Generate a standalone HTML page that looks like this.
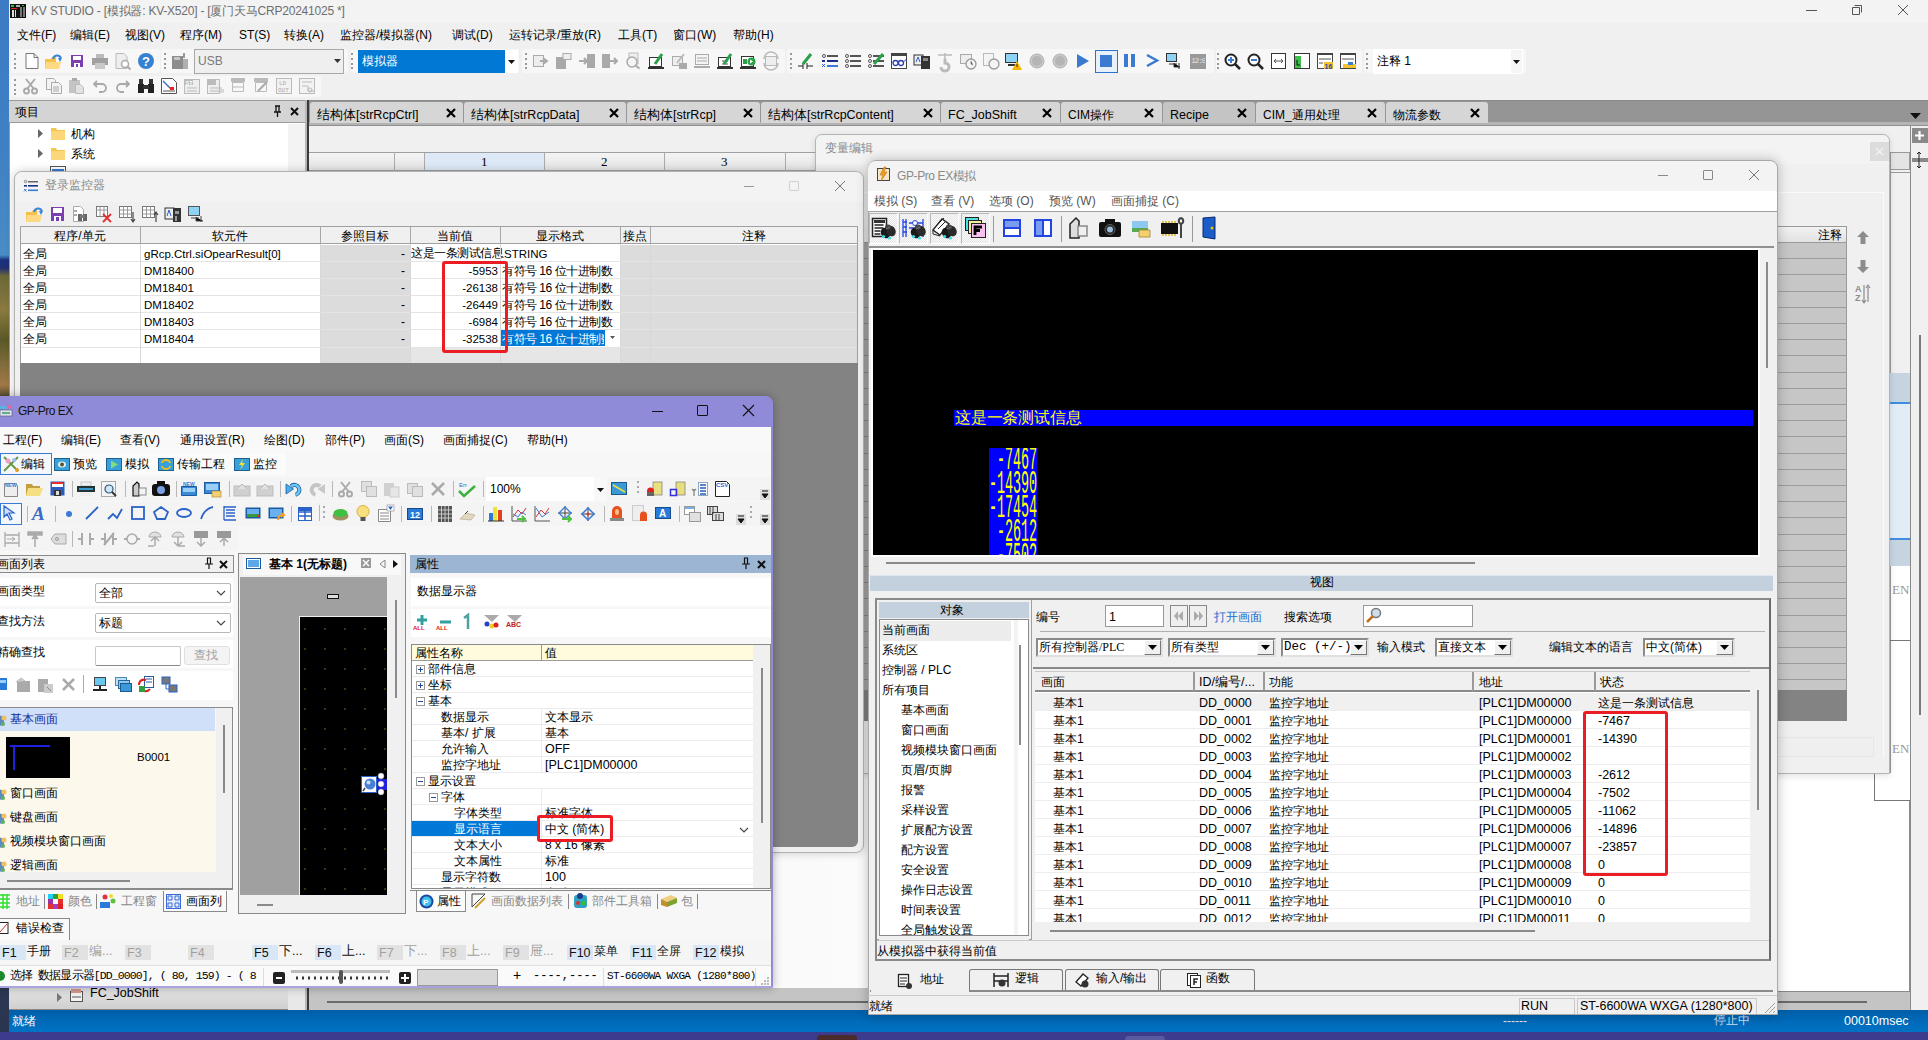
<!DOCTYPE html>
<html><head><meta charset="utf-8">
<style>
*{box-sizing:border-box;margin:0;padding:0}
html,body{width:1928px;height:1040px;overflow:hidden;background:#f0f0f0;font-family:"Liberation Sans",sans-serif;font-size:12px;color:#000;position:relative}
.a{position:absolute}
.t{position:absolute;white-space:nowrap;line-height:1}
svg{position:absolute;overflow:visible}
</style></head>
<body>
<div class="a" style="left:0;top:0;width:9px;height:1040px;background:linear-gradient(#3d7bc4 0,#3f80c4 150px,#4a8cc4 255px,#1a3080 260px,#203070 268px,#6a6838 276px,#8a7a40 310px,#5a5828 340px,#8a7040 370px,#a07848 385px,#5a5030 396px,#2d3b55 900px,#2a3550 1040px)"></div>
<!-- title bar -->
<div class="a" style="left:9px;top:0;width:1919px;height:23px;background:#f3f3f3"></div>
<svg class="a" style="left:10px;top:4px" width="16" height="14" viewBox="0 0 16 14"><rect width="16" height="14" fill="#111"/><rect x="1" y="1" width="3" height="2" fill="#2c2"/><rect x="6" y="1" width="4" height="2" fill="#aaa"/><rect x="1" y="4" width="6" height="1" fill="#e22"/><rect x="2" y="6" width="2" height="7" fill="#ddd"/><rect x="5" y="6" width="1" height="7" fill="#ddd"/><rect x="10" y="3" width="2" height="10" fill="#777"/><rect x="13" y="3" width="2" height="10" fill="#777"/><rect x="12" y="1" width="2" height="1" fill="#2c2"/></svg>
<div class="t" style="left:31px;top:5px;font-size:12px;letter-spacing:-.22px;color:#6e6e6e">KV STUDIO - [模拟器: KV-X520] - [厦门天马CRP20241025 *]</div>
<div class="a" style="left:1806px;top:10px;width:11px;height:1px;background:#555"></div>
<svg class="a" style="left:1851px;top:4px" width="12" height="12" viewBox="0 0 12 12"><path d="M3.5 1.5h7v7M1.5 3.5h7v7h-7z" fill="none" stroke="#555" stroke-width="1"/></svg>
<svg class="a" style="left:1897px;top:4px" width="12" height="12" viewBox="0 0 12 12"><path d="M1 1l10 10M11 1L1 11" stroke="#555" stroke-width="1"/></svg>
<!-- menu -->
<div class="a" style="left:9px;top:23px;width:1919px;height:24px;background:#f0f0f0"></div>
<div class="t" style="left:17px;top:29px;font-size:12px">文件(F)</div>
<div class="t" style="left:70px;top:29px;font-size:12px">编辑(E)</div>
<div class="t" style="left:125px;top:29px;font-size:12px">视图(V)</div>
<div class="t" style="left:180px;top:29px;font-size:12px">程序(M)</div>
<div class="t" style="left:239px;top:29px;font-size:12px">ST(S)</div>
<div class="t" style="left:284px;top:29px;font-size:12px">转换(A)</div>
<div class="t" style="left:340px;top:29px;font-size:12px">监控器/模拟器(N)</div>
<div class="t" style="left:452px;top:29px;font-size:12px">调试(D)</div>
<div class="t" style="left:509px;top:29px;font-size:12px">运转记录/重放(R)</div>
<div class="t" style="left:618px;top:29px;font-size:12px">工具(T)</div>
<div class="t" style="left:673px;top:29px;font-size:12px">窗口(W)</div>
<div class="t" style="left:733px;top:29px;font-size:12px">帮助(H)</div>

<!-- toolbar bands row1 -->
<div class="a" style="left:11px;top:49px;width:149px;height:24px;background:#f7f7f7;border-radius:3px"></div>
<div class="a" style="left:161px;top:49px;width:187px;height:24px;background:#f7f7f7;border-radius:3px"></div>
<div class="a" style="left:351px;top:49px;width:168px;height:24px;background:#f9f9f9;border-radius:3px"></div>
<div class="a" style="left:522px;top:49px;width:263px;height:24px;background:#f7f7f7;border-radius:3px"></div>
<div class="a" style="left:787px;top:49px;width:427px;height:24px;background:#f7f7f7;border-radius:3px"></div>
<div class="a" style="left:1216px;top:49px;width:146px;height:24px;background:#f7f7f7;border-radius:3px"></div>
<div class="a" style="left:1364px;top:49px;width:162px;height:24px;background:#f7f7f7;border-radius:3px"></div>
<!-- row2 -->
<div class="a" style="left:11px;top:76px;width:310px;height:21px;background:#f7f7f7;border-radius:3px"></div>
<!-- grips -->
<svg style="left:14px;top:53px" width="3" height="16"><g fill="#999"><rect y="0" width="2" height="2"/><rect y="5" width="2" height="2"/><rect y="10" width="2" height="2"/><rect y="14" width="2" height="2"/></g></svg>
<svg style="left:164px;top:53px" width="3" height="16"><g fill="#999"><rect y="0" width="2" height="2"/><rect y="5" width="2" height="2"/><rect y="10" width="2" height="2"/><rect y="14" width="2" height="2"/></g></svg>
<svg style="left:351px;top:53px" width="3" height="16"><g fill="#999"><rect y="0" width="2" height="2"/><rect y="5" width="2" height="2"/><rect y="10" width="2" height="2"/><rect y="14" width="2" height="2"/></g></svg>
<svg style="left:525px;top:53px" width="3" height="16"><g fill="#999"><rect y="0" width="2" height="2"/><rect y="5" width="2" height="2"/><rect y="10" width="2" height="2"/><rect y="14" width="2" height="2"/></g></svg>
<svg style="left:790px;top:53px" width="3" height="16"><g fill="#999"><rect y="0" width="2" height="2"/><rect y="5" width="2" height="2"/><rect y="10" width="2" height="2"/><rect y="14" width="2" height="2"/></g></svg>
<svg style="left:1217px;top:53px" width="3" height="16"><g fill="#999"><rect y="0" width="2" height="2"/><rect y="5" width="2" height="2"/><rect y="10" width="2" height="2"/><rect y="14" width="2" height="2"/></g></svg>
<svg style="left:1366px;top:53px" width="3" height="16"><g fill="#999"><rect y="0" width="2" height="2"/><rect y="5" width="2" height="2"/><rect y="10" width="2" height="2"/><rect y="14" width="2" height="2"/></g></svg>
<svg style="left:14px;top:79px" width="3" height="16"><g fill="#999"><rect y="0" width="2" height="2"/><rect y="5" width="2" height="2"/><rect y="10" width="2" height="2"/><rect y="14" width="2" height="2"/></g></svg>
<!-- row1 icons -->
<svg style="left:25px;top:53px" width="14" height="16"><path d="M1 .5h8l4 4v11H1z" fill="#fff" stroke="#777"/><path d="M9 .5v4h4" fill="none" stroke="#777"/></svg>
<svg style="left:45px;top:53px" width="18" height="16"><path d="M0 6h6l1-2h4v12H0z" fill="#f6c14a"/><path d="M1 9h15l-2 7H0z" fill="#fcd982"/><path d="M8 6c1-4 6-5 8-1" fill="none" stroke="#3a83d6" stroke-width="2"/><path d="M13 5l4 0-2 4z" fill="#3a83d6"/></svg>
<svg style="left:70px;top:54px" width="14" height="14"><rect x="1" y="1" width="12" height="12" fill="#7b3fb0"/><rect x="3" y="2" width="8" height="4" fill="#fff"/><rect x="4" y="9" width="6" height="4" fill="#fff"/><rect x="6" y="10" width="2" height="3" fill="#7b3fb0"/></svg>
<svg style="left:92px;top:54px" width="16" height="15"><rect x="4" y="0" width="8" height="4" fill="#bbb"/><rect x="0" y="4" width="16" height="7" fill="#a0a0a0"/><rect x="3" y="9" width="10" height="6" fill="#c8c8c8"/></svg>
<svg style="left:115px;top:53px" width="17" height="17"><path d="M1 .5h8l3 3v12H1z" fill="#eee" stroke="#bbb"/><circle cx="10" cy="11" r="3.5" fill="#fff" stroke="#aaa" stroke-width="1.5"/><path d="M12.5 13.5l3 3" stroke="#aaa" stroke-width="2"/></svg>
<svg style="left:138px;top:53px" width="16" height="16"><circle cx="8" cy="8" r="8" fill="#3781d2"/><text x="8" y="13" font-size="13" font-weight="bold" fill="#fff" text-anchor="middle" font-family="Liberation Sans">?</text></svg>
<svg style="left:172px;top:53px" width="17" height="16"><rect x="0" y="3" width="11" height="13" fill="#8c8c8c"/><rect x="2" y="4" width="6" height="3" fill="#c6c6c6"/><rect x="11" y="6" width="5" height="10" fill="#b0b0b0"/><path d="M12 0v5" stroke="#999" stroke-width="2"/></svg>
<!-- USB combo -->
<div class="a" style="left:194px;top:49px;width:150px;height:25px;border:1px solid #a8a8a8;background:#efefef"></div>
<div class="t" style="left:198px;top:55px;font-size:12px;color:#7a7a7a">USB</div>
<svg style="left:334px;top:59px" width="7" height="4"><path d="M0 0h7L3.5 4z" fill="#333"/></svg>
<!-- simulator combo -->
<div class="a" style="left:358px;top:50px;width:160px;height:23px;background:#fff"></div>
<div class="a" style="left:358px;top:50px;width:147px;height:23px;background:#0078d4"></div>
<div class="t" style="left:362px;top:55px;font-size:12px;color:#fff">模拟器</div>
<svg style="left:508px;top:60px" width="7" height="4"><path d="M0 0h7L3.5 4z" fill="#111"/></svg>

<!-- row2 icons -->
<svg style="left:23px;top:78px" width="15" height="17"><path d="M3 1l8 10M12 1L4 11" stroke="#aaa" stroke-width="2"/><circle cx="3.5" cy="13" r="2.5" fill="none" stroke="#aaa" stroke-width="2"/><circle cx="11.5" cy="13" r="2.5" fill="none" stroke="#aaa" stroke-width="2"/></svg>
<svg style="left:46px;top:78px" width="16" height="16"><path d="M.5 .5h7l2 2v9h-9z" fill="#f4f4f4" stroke="#aaa"/><path d="M5.5 4.5h7l3 3v8h-10z" fill="#f4f4f4" stroke="#aaa"/><path d="M7 9h6M7 11h6M7 13h6" stroke="#aaa"/></svg>
<svg style="left:69px;top:78px" width="16" height="16"><rect x="0" y="2" width="11" height="13" fill="#c4c4c4"/><rect x="3" y="0" width="5" height="3" fill="#aaa"/><path d="M6.5 6.5h5l3 3v6h-8z" fill="#e2e2e2" stroke="#bbb"/></svg>
<svg style="left:93px;top:80px" width="14" height="12"><path d="M4 1L1 4l3 3M1 4h8a4 4 0 010 8H6" fill="none" stroke="#a9a9a9" stroke-width="1.8"/></svg>
<svg style="left:116px;top:80px" width="14" height="12"><path d="M10 1l3 3-3 3M13 4H5a4 4 0 000 8h3" fill="none" stroke="#a9a9a9" stroke-width="1.8"/></svg>
<svg style="left:138px;top:78px" width="16" height="16"><rect x="1" y="1" width="4" height="6" fill="#333"/><rect x="11" y="1" width="4" height="6" fill="#333"/><rect x="0" y="6" width="6" height="9" fill="#222"/><rect x="10" y="6" width="6" height="9" fill="#222"/><rect x="5" y="7" width="6" height="4" fill="#333"/></svg>
<svg style="left:161px;top:78px" width="16" height="16"><path d="M.5 .5h11l4 4v11H.5z" fill="#fff" stroke="#555"/><path d="M2 3l8 8" stroke="#3a6fc4" stroke-width="1.5"/><rect x="9" y="9" width="4" height="3" fill="#e22"/><path d="M2 13h12" stroke="#555"/></svg>
<svg style="left:184px;top:79px" width="16" height="15"><rect x=".5" y=".5" width="15" height="14" fill="#eee" stroke="#bbb"/><rect x="1" y="1" width="8" height="5" fill="#bbb"/><text x="1.5" y="5.5" font-size="5.5" fill="#fff" font-family="Liberation Sans" font-weight="bold">ST</text><path d="M3 9h10M3 12h10" stroke="#bbb"/></svg>
<svg style="left:207px;top:79px" width="17" height="16"><rect x=".5" y=".5" width="12" height="14" fill="#eee" stroke="#bbb"/><rect x="1" y="1" width="8" height="5" fill="#bbb"/><path d="M3 9h9M3 12h9M14 8v6M16 10v4" stroke="#bbb"/></svg>
<svg style="left:230px;top:78px" width="16" height="15"><rect x="1" y="0" width="14" height="4" fill="#bbb"/><path d="M2.5 4.5h11v9h-11z" fill="none" stroke="#bbb"/><path d="M3 9h10" stroke="#bbb"/></svg>
<svg style="left:253px;top:78px" width="16" height="16"><rect x="1" y="0" width="14" height="4" fill="#bbb"/><path d="M2.5 4.5h11v9h-11z" fill="none" stroke="#bbb"/><path d="M5 13l9-9" stroke="#aaa" stroke-width="2"/></svg>
<svg style="left:276px;top:78px" width="16" height="16"><rect x=".5" y=".5" width="15" height="15" fill="#f2f2f2" stroke="#bbb"/><text x="3" y="7" font-size="6" fill="#aaa" font-family="Liberation Mono">LD</text><text x="2" y="14" font-size="6" fill="#aaa" font-family="Liberation Mono">OUT</text></svg>
<svg style="left:299px;top:78px" width="16" height="16"><rect x=".5" y=".5" width="15" height="15" fill="#f2f2f2" stroke="#bbb"/><path d="M3 4h10M3 8h6v5h6" fill="none" stroke="#bbb"/><circle cx="11" cy="12" r="2" fill="none" stroke="#bbb"/></svg>
<!-- row1 group3 icons (grayed) -->
<svg style="left:533px;top:54px" width="16" height="14"><rect x=".5" y="1.5" width="10" height="11" fill="#eee" stroke="#aaa"/><path d="M7 7h6M10 4l4 3-4 3" fill="none" stroke="#aaa" stroke-width="2"/></svg>
<svg style="left:556px;top:53px" width="16" height="16"><rect x="0" y="4" width="10" height="12" fill="#a9a9a9"/><rect x="7" y=".5" width="8" height="6" fill="#eee" stroke="#aaa"/></svg>
<svg style="left:579px;top:54px" width="16" height="14"><rect x="8" y="0" width="8" height="14" fill="#a9a9a9"/><path d="M0 7h8M5 4l3 3-3 3" fill="none" stroke="#aaa" stroke-width="2"/></svg>
<svg style="left:602px;top:54px" width="16" height="14"><rect x="0" y="0" width="8" height="14" fill="#a9a9a9"/><path d="M8 7h7M12 4l3 3-3 3" fill="none" stroke="#aaa" stroke-width="2"/></svg>
<svg style="left:625px;top:53px" width="16" height="16"><rect x="4" y="0" width="9" height="11" fill="#eee" stroke="#bbb"/><circle cx="7" cy="9" r="5" fill="#f4f4f4" stroke="#aaa" stroke-width="1.5"/><path d="M10.5 12.5l4 3" stroke="#aaa" stroke-width="2"/></svg>
<svg style="left:648px;top:53px" width="16" height="16"><rect x="1.5" y="4.5" width="12" height="9" fill="#fff" stroke="#333"/><rect x="0" y="14" width="16" height="2" fill="#333"/><path d="M7 11l7-10" stroke="#2aa04a" stroke-width="3"/></svg>
<svg style="left:671px;top:53px" width="16" height="16"><rect x="1.5" y="3.5" width="10" height="9" fill="#eee" stroke="#aaa"/><rect x="8" y="10" width="8" height="6" fill="#aaa"/><path d="M6 10l7-9" stroke="#bbb" stroke-width="2"/></svg>
<svg style="left:694px;top:53px" width="16" height="16"><rect x="1.5" y="1.5" width="13" height="10" fill="#f4f4f4" stroke="#aaa"/><path d="M3 5h10M3 8h10" stroke="#aaa"/><rect x="0" y="13" width="16" height="2" fill="#aaa"/></svg>
<svg style="left:717px;top:53px" width="16" height="16"><rect x="1.5" y="4.5" width="12" height="9" fill="#fff" stroke="#333"/><rect x="0" y="14" width="16" height="2" fill="#333"/><path d="M5 8h6M5 11h6" stroke="#555"/><path d="M7 11l7-10" stroke="#2aa04a" stroke-width="3"/></svg>
<svg style="left:740px;top:53px" width="16" height="16"><rect x="1.5" y="3.5" width="12" height="10" fill="#fff" stroke="#333"/><rect x="0" y="14" width="16" height="2" fill="#333"/><rect x="3" y="6" width="4" height="5" fill="#2aa04a"/><circle cx="11.5" cy="8.5" r="4" fill="#2aa04a"/><path d="M10 6.5v4l3-2z" fill="#fff"/></svg>
<svg style="left:763px;top:53px" width="16" height="16"><rect x="2.5" y="3.5" width="11" height="9" fill="#eee" stroke="#bbb"/><path d="M1 6a7 7 0 0114 0M15 10a7 7 0 01-14 0" fill="none" stroke="#bbb" stroke-width="1.5"/></svg>
<!-- group4 -->
<svg style="left:798px;top:53px" width="17" height="17"><path d="M0 13h5M9 13h6M5 10v6M9 10v6" stroke="#222"/><path d="M5 11l8-10" stroke="#2aa04a" stroke-width="3"/></svg>
<svg style="left:822px;top:54px" width="16" height="14"><circle cx="2" cy="2" r="1.5" fill="none" stroke="#555"/><rect x="5" y="1" width="11" height="2" fill="#555"/><rect x="0" y="6" width="3" height="2" fill="#1a2f8c"/><rect x="5" y="6" width="11" height="2" fill="#1a2f8c"/><path d="M0 10l3 3M3 10l-3 3" stroke="#2a62c8"/><rect x="5" y="11" width="11" height="2" fill="#3a7ad8"/></svg>
<svg style="left:845px;top:54px" width="16" height="14"><g fill="none" stroke="#555"><circle cx="2" cy="2" r="1.5"/><circle cx="2" cy="7" r="1.5"/><circle cx="2" cy="12" r="1.5"/></g><g fill="#555"><rect x="5" y="1" width="11" height="2"/><rect x="5" y="6" width="11" height="2"/><rect x="5" y="11" width="11" height="2"/></g></svg>
<svg style="left:868px;top:53px" width="17" height="16"><g fill="none" stroke="#555"><circle cx="2" cy="3" r="1.5"/><circle cx="2" cy="8" r="1.5"/><circle cx="2" cy="13" r="1.5"/></g><g fill="#555"><rect x="5" y="2" width="11" height="2"/><rect x="5" y="7" width="11" height="2"/><rect x="5" y="12" width="11" height="2"/></g><path d="M6 11l9-10" stroke="#2aa04a" stroke-width="3"/></svg>
<svg style="left:891px;top:53px" width="16" height="16"><rect x=".5" y=".5" width="15" height="15" fill="#fff" stroke="#444"/><rect x="0" y="0" width="16" height="3" fill="#444"/><circle cx="4.5" cy="10" r="2.5" fill="none" stroke="#2a3fb0" stroke-width="1.3"/><circle cx="10" cy="10" r="2.5" fill="none" stroke="#2a3fb0" stroke-width="1.3"/><path d="M12.5 9l3-3" stroke="#2a3fb0"/></svg>
<svg style="left:914px;top:53px" width="16" height="16"><rect x="0" y="2" width="9" height="10" fill="#eee" stroke="#333"/><path d="M2 9l2-5 2 5" fill="none" stroke="#2a62c8"/><rect x="7" y="3" width="9" height="13" fill="#333"/><rect x="9" y="5" width="5" height="3" fill="#888"/></svg>
<svg style="left:937px;top:53px" width="16" height="17"><path d="M1 2h14M8 0v6" stroke="#bbb" stroke-width="1.5"/><path d="M8 6v4a4 4 0 11-4 4" fill="none" stroke="#bbb" stroke-width="3"/></svg>
<svg style="left:960px;top:53px" width="17" height="17"><rect x=".5" y="1.5" width="11" height="9" fill="#eee" stroke="#aaa"/><circle cx="11" cy="11" r="5" fill="#f4f4f4" stroke="#999" stroke-width="1.3"/><path d="M11 8v3l2 1" stroke="#999"/></svg>
<svg style="left:983px;top:53px" width="17" height="17"><rect x=".5" y=".5" width="10" height="12" fill="#f4f4f4" stroke="#bbb"/><circle cx="11" cy="11" r="5" fill="#f4f4f4" stroke="#999" stroke-width="1.3"/></svg>
<svg style="left:1005px;top:53px" width="18" height="17"><rect x=".5" y=".5" width="12" height="9" fill="#8fd3f4" stroke="#333"/><rect x="3" y="11" width="7" height="2" fill="#333"/><path d="M12 8l5 9H7z" fill="#f4b400"/><rect x="11.5" y="11" width="1" height="3" fill="#333"/></svg>
<svg style="left:1029px;top:53px" width="16" height="16"><circle cx="8" cy="8" r="7" fill="#c8c8c8" stroke="#b0b0b0"/><circle cx="8" cy="8" r="5" fill="#b5b5b5"/></svg>
<svg style="left:1052px;top:53px" width="16" height="16"><circle cx="8" cy="8" r="7" fill="#c8c8c8" stroke="#b0b0b0"/><circle cx="8" cy="8" r="5" fill="#b5b5b5"/></svg>
<svg style="left:1076px;top:54px" width="14" height="14"><path d="M1 0l12 7-12 7z" fill="#3a7ad0"/></svg>
<div class="a" style="left:1095px;top:50px;width:23px;height:23px;border:1px solid #2a74d0;background:#e8f1fb"></div>
<div class="a" style="left:1100px;top:55px;width:12px;height:12px;background:#3a7ad0"></div>
<svg style="left:1124px;top:54px" width="12" height="13"><rect x="0" y="0" width="4" height="13" fill="#3a7ad0"/><rect x="7" y="0" width="4" height="13" fill="#3a7ad0"/></svg>
<svg style="left:1146px;top:54px" width="12" height="13"><path d="M1 1l10 5.5L1 12" fill="none" stroke="#3a7ad0" stroke-width="2.5"/></svg>
<svg style="left:1166px;top:53px" width="18" height="17"><rect x=".5" y=".5" width="10" height="8" fill="#8fd3f4" stroke="#333"/><path d="M3 11h8M8 10v4h6M13 10v6" stroke="#333"/></svg>
<div class="a" style="left:1190px;top:54px;width:16px;height:15px;background:#999"></div>
<div class="t" style="left:1191px;top:57px;width:14px;overflow:hidden;font-size:8px;letter-spacing:-1.2px;color:#e4e4e4;font-family:'Liberation Mono'">12:00</div>
<!-- group5 -->
<svg style="left:1224px;top:53px" width="17" height="17"><circle cx="7" cy="7" r="5.5" fill="#fff" stroke="#222" stroke-width="2"/><path d="M4 7h6M7 4v6" stroke="#3a7ad0" stroke-width="2"/><path d="M11 11l5 5" stroke="#222" stroke-width="2.5"/></svg>
<svg style="left:1247px;top:53px" width="17" height="17"><circle cx="7" cy="7" r="5.5" fill="#fff" stroke="#222" stroke-width="2"/><path d="M4 7h6" stroke="#3a7ad0" stroke-width="2"/><path d="M11 11l5 5" stroke="#222" stroke-width="2.5"/></svg>
<svg style="left:1271px;top:53px" width="15" height="16"><rect x=".5" y=".5" width="14" height="15" fill="#fff" stroke="#333"/><path d="M3 8h9M5 6l-2 2 2 2M10 6l2 2-2 2" fill="none" stroke="#555"/></svg>
<svg style="left:1294px;top:53px" width="16" height="16"><rect x=".5" y=".5" width="15" height="15" fill="#fff" stroke="#333"/><rect x="1" y="3" width="6" height="12" fill="#3cc04a"/><path d="M3 7v5h3" fill="none" stroke="#111"/></svg>
<svg style="left:1317px;top:53px" width="16" height="16"><rect x=".5" y=".5" width="15" height="15" fill="#fff" stroke="#444"/><rect x="0" y="0" width="16" height="2" fill="#444"/><path d="M2 6h12M2 10h4" stroke="#555"/><rect x="7" y="9" width="9" height="7" fill="#f4c430"/><text x="7.5" y="15.5" font-size="7" fill="#1a4aa8" font-family="Liberation Sans" font-weight="bold">16</text></svg>
<svg style="left:1340px;top:53px" width="16" height="16"><rect x=".5" y=".5" width="15" height="15" fill="#fff" stroke="#444"/><rect x="0" y="0" width="16" height="2" fill="#444"/><path d="M2 6h12" stroke="#555"/><rect x="3" y="11" width="13" height="4" fill="#f4c430"/><rect x="8" y="9" width="5" height="3" fill="#3a7ad0"/></svg>
<!-- comment combo -->
<div class="a" style="left:1373px;top:49px;width:150px;height:25px;background:#fff"></div>
<div class="a" style="left:1511px;top:50px;width:11px;height:23px;background:#f6f6f6"></div>
<div class="t" style="left:1377px;top:55px;font-size:12px">注释 1</div>
<svg style="left:1513px;top:60px" width="7" height="4"><path d="M0 0h7L3.5 4z" fill="#111"/></svg>

<!-- project panel -->
<div class="a" style="left:9px;top:100px;width:297px;height:23px;background:#d4d4d4;border-top:1px solid #9a9a9a;border-bottom:1px solid #9a9a9a"></div>
<div class="t" style="left:15px;top:106px;font-size:12px">项目</div>
<svg style="left:273px;top:106px" width="9" height="11"><path d="M2 0h5M3 0v6M6 0v6M1 6h7M4.5 6v5" stroke="#111" stroke-width="1.3"/></svg>
<svg style="left:290px;top:107px" width="9" height="9"><path d="M1 1l7 7M8 1L1 8" stroke="#111" stroke-width="2"/></svg>
<div class="a" style="left:9px;top:123px;width:297px;height:909px;background:#fff;border-left:1px solid #9a9a9a"></div>
<div class="a" style="left:288px;top:124px;width:17px;height:50px;background:#f3f3f3"></div>
<svg style="left:38px;top:129px" width="5" height="9"><path d="M0 0l5 4.5L0 9z" fill="#666"/></svg>
<svg style="left:51px;top:128px" width="14" height="12"><path d="M0 0h5l1 2h8v10H0z" fill="#f4c650"/><rect x="0" y="3" width="14" height="9" fill="#fbd77a"/></svg>
<div class="t" style="left:71px;top:128px;font-size:12px">机构</div>
<svg style="left:38px;top:149px" width="5" height="9"><path d="M0 0l5 4.5L0 9z" fill="#666"/></svg>
<svg style="left:51px;top:148px" width="14" height="12"><path d="M0 0h5l1 2h8v10H0z" fill="#f4c650"/><rect x="0" y="3" width="14" height="9" fill="#fbd77a"/></svg>
<div class="t" style="left:71px;top:148px;font-size:12px">系统</div>
<div class="a" style="left:50px;top:166px;width:16px;height:6px;border:1px solid #555;border-bottom:none;background:#fff"></div>
<div class="a" style="left:52px;top:169px;width:12px;height:3px;background:#3a7ad0"></div>
<div class="a" style="left:305px;top:100px;width:2px;height:932px;background:#b8b8b8"></div>
<div class="a" style="left:307px;top:100px;width:2px;height:910px;background:#3a3a3a"></div>
<!-- bottom tree row visible -->
<div class="a" style="left:9px;top:988px;width:296px;height:22px;background:linear-gradient(#e6e6e6,#cfcfcf);border-bottom:1px solid #888"></div><div class="a" style="left:288px;top:988px;width:17px;height:22px;background:#e8e8e8"></div>
<svg style="left:57px;top:993px" width="5" height="9"><path d="M0 0l5 4.5L0 9z" fill="#777"/></svg>
<svg style="left:69px;top:989px" width="16" height="14"><rect x="1.5" y="2.5" width="12" height="10" fill="#f2f2f2" stroke="#555"/><rect x="2" y="0" width="10" height="4" fill="#d59a8a"/><path d="M3 8h9" stroke="#555"/></svg>
<div class="t" style="left:90px;top:987px;font-size:12.5px">FC_JobShift</div>
<!-- tab strip -->
<div class="a" style="left:309px;top:100px;width:1619px;height:26px;background:#959595;border-top:1px solid #8a8a8a"></div>
<div class="a" style="left:309px;top:122px;width:1619px;height:3px;background:#b4b4b4"></div>
<div class="a" style="left:309px;top:125px;width:1619px;height:1px;background:#909090"></div>

<div class="a" style="left:310px;top:102px;width:153px;height:21px;background:#d6d6d6;border-radius:3px 3px 0 0"></div>
<div class="t" style="left:317px;top:109px;font-size:12.5px">结构体[strRcpCtrl]</div>
<svg style="left:446px;top:108px" width="10" height="10"><path d="M1 1l8 8M9 1L1 9" stroke="#000" stroke-width="2.2"/></svg>
<div class="a" style="left:464px;top:102px;width:162px;height:21px;background:#d6d6d6;border-radius:3px 3px 0 0"></div>
<div class="t" style="left:471px;top:109px;font-size:12.5px">结构体[strRcpData]</div>
<svg style="left:609px;top:108px" width="10" height="10"><path d="M1 1l8 8M9 1L1 9" stroke="#000" stroke-width="2.2"/></svg>
<div class="a" style="left:627px;top:102px;width:133px;height:21px;background:#d6d6d6;border-radius:3px 3px 0 0"></div>
<div class="t" style="left:634px;top:109px;font-size:12.5px">结构体[strRcp]</div>
<svg style="left:743px;top:108px" width="10" height="10"><path d="M1 1l8 8M9 1L1 9" stroke="#000" stroke-width="2.2"/></svg>
<div class="a" style="left:761px;top:102px;width:179px;height:21px;background:#d6d6d6;border-radius:3px 3px 0 0"></div>
<div class="t" style="left:768px;top:109px;font-size:12.5px">结构体[strRcpContent]</div>
<svg style="left:923px;top:108px" width="10" height="10"><path d="M1 1l8 8M9 1L1 9" stroke="#000" stroke-width="2.2"/></svg>
<div class="a" style="left:941px;top:102px;width:119px;height:21px;background:#d6d6d6;border-radius:3px 3px 0 0"></div>
<div class="t" style="left:948px;top:109px;font-size:12.5px">FC_JobShift</div>
<svg style="left:1042px;top:108px" width="10" height="10"><path d="M1 1l8 8M9 1L1 9" stroke="#000" stroke-width="2.2"/></svg>
<div class="a" style="left:1061px;top:102px;width:101px;height:21px;background:#d6d6d6;border-radius:3px 3px 0 0"></div>
<div class="t" style="left:1068px;top:109px;font-size:12px">CIM操作</div>
<svg style="left:1144px;top:108px" width="10" height="10"><path d="M1 1l8 8M9 1L1 9" stroke="#000" stroke-width="2.2"/></svg>
<div class="a" style="left:1163px;top:102px;width:92px;height:21px;background:#c4c4c4;border-radius:3px 3px 0 0"></div>
<div class="t" style="left:1170px;top:109px;font-size:12.5px">Recipe</div>
<svg style="left:1237px;top:108px" width="10" height="10"><path d="M1 1l8 8M9 1L1 9" stroke="#000" stroke-width="2.2"/></svg>
<div class="a" style="left:1256px;top:102px;width:129px;height:21px;background:#d6d6d6;border-radius:3px 3px 0 0"></div>
<div class="t" style="left:1263px;top:109px;font-size:12px">CIM_通用处理</div>
<svg style="left:1367px;top:108px" width="10" height="10"><path d="M1 1l8 8M9 1L1 9" stroke="#000" stroke-width="2.2"/></svg>
<div class="a" style="left:1386px;top:102px;width:102px;height:21px;background:#d6d6d6;border-radius:3px 3px 0 0"></div>
<div class="t" style="left:1393px;top:109px;font-size:12px">物流参数</div>
<svg style="left:1470px;top:108px" width="10" height="10"><path d="M1 1l8 8M9 1L1 9" stroke="#000" stroke-width="2.2"/></svg>
<svg style="left:1910px;top:113px" width="11" height="6"><path d="M0 0h11L5.5 6z" fill="#111"/></svg>
<!-- MDI content: grid doc -->
<div class="a" style="left:309px;top:126px;width:1619px;height:884px;background:#f0f0f0"></div>
<div class="a" style="left:309px;top:152px;width:510px;height:19px;background:linear-gradient(#f4f4f4,#e4e4e4);border-top:1px solid #a0a0a0;border-bottom:1px solid #a0a0a0"></div>
<div class="a" style="left:394px;top:152px;width:1px;height:19px;background:#aaa"></div>
<div class="a" style="left:424px;top:153px;width:120px;height:17px;background:#dde9f6;border-left:1px solid #aaa"></div>
<div class="a" style="left:544px;top:152px;width:1px;height:19px;background:#aaa"></div>
<div class="a" style="left:664px;top:152px;width:1px;height:19px;background:#aaa"></div>
<div class="a" style="left:785px;top:152px;width:1px;height:19px;background:#aaa"></div>
<div class="a" style="left:309px;top:171px;width:1601px;height:817px;background:linear-gradient(90deg,#f4f4f4,#fcfcfc 40%,#fff)"></div>
<div class="t" style="left:481px;top:155px;font-size:13px;font-family:'Liberation Serif'">1</div>
<div class="t" style="left:601px;top:155px;font-size:13px;font-family:'Liberation Serif'">2</div>
<div class="t" style="left:721px;top:155px;font-size:13px;font-family:'Liberation Serif'">3</div>
<div class="a" style="left:309px;top:988px;width:1601px;height:22px;background:#c4c4c4"></div>
<div class="a" style="left:327px;top:1001px;width:1540px;height:2px;background:#6a6a6a"></div>
<!-- right dock strip -->
<div class="a" style="left:1910px;top:126px;width:18px;height:884px;background:#f0f0f0;border-left:1px solid #8a8a8a"></div>
<div class="a" style="left:1912px;top:128px;width:16px;height:15px;background:#8a8a8a"></div>
<svg style="left:1914px;top:130px" width="11" height="11"><path d="M5.5 1v9M1 5.5h9" stroke="#fff" stroke-width="2.2"/></svg>
<svg style="left:1910px;top:151px" width="18" height="18"><path d="M2 8h16M2 10h16M9 1v16M7 3l2-2 2 2M7 15l2 2 2-2" fill="none" stroke="#222" stroke-width="1"/></svg>
<div class="a" style="left:1919px;top:335px;width:2px;height:380px;background:#7a7a7a"></div>
<!-- panel behind varedit -->
<div class="a" style="left:1890px;top:152px;width:20px;height:840px;background:#f0f0f0;border-left:1px solid #9a9a9a"></div>
<div class="a" style="left:1890px;top:152px;width:20px;height:18px;background:#e4e4e4;border:1px solid #9a9a9a"></div>
<div class="a" style="left:1890px;top:172px;width:20px;height:1px;background:#9a9a9a"></div>
<div class="a" style="left:1890px;top:373px;width:20px;height:29px;background:#c6d4e2"></div>
<div class="a" style="left:1890px;top:402px;width:20px;height:2px;background:#3d8ee0"></div>
<div class="a" style="left:1890px;top:404px;width:20px;height:134px;background:#e1ecf7"></div>
<div class="a" style="left:1890px;top:538px;width:20px;height:2px;background:#3d8ee0"></div>
<div class="a" style="left:1890px;top:540px;width:20px;height:26px;background:#c6d4e2"></div>
<div class="a" style="left:1890px;top:566px;width:20px;height:426px;background:#fff;border-left:1px solid #9a9a9a"></div>
<div class="a" style="left:1890px;top:640px;width:20px;height:1px;background:#777"></div>
<div class="t" style="left:1892px;top:583px;font-size:13px;color:#999;font-family:'Liberation Serif'">EN</div>
<div class="t" style="left:1892px;top:742px;font-size:13px;color:#999;font-family:'Liberation Serif'">EN</div>
<div class="a" style="left:1777px;top:773px;width:133px;height:219px;background:#fff;border-right:1px solid #8a8a8a;border-bottom:1px solid #8a8a8a"></div>
<div class="a" style="left:1874px;top:773px;width:36px;height:28px;border-left:1px solid #777;border-bottom:1px solid #777;background:#fff"></div>
<!-- status bar -->
<div class="a" style="left:9px;top:1010px;width:1919px;height:22px;background:linear-gradient(#005ea8,#006ab8 50%,#0072c4)"></div>
<div class="t" style="left:12px;top:1015px;font-size:12px;color:#fff">就绪</div>
<div class="t" style="left:1503px;top:1015px;font-size:12px;color:#dfe8f3">------</div>
<div class="t" style="left:1714px;top:1014px;font-size:12px;color:#cfdff0">停止中</div>
<div class="t" style="left:1844px;top:1015px;font-size:12.5px;color:#fff">00010msec</div>
<div class="a" style="left:0;top:1032px;width:1928px;height:8px;background:#3d3b8c"></div>
<div class="a" style="left:817px;top:1035px;width:40px;height:8px;background:#4a2a2a;border-radius:4px"></div>
<div class="a" style="left:1125px;top:1036px;width:40px;height:8px;background:#5a5aa0;border-radius:4px"></div>

<!-- 变量编辑 window -->
<div class="a" style="left:815px;top:134px;width:1075px;height:640px;background:#f0f0f0;border:1px solid #b4b4b4;border-radius:7px 7px 0 0;box-shadow:0 2px 6px rgba(0,0,0,.12)"></div>
<div class="a" style="left:816px;top:135px;width:1073px;height:29px;background:#f3f3f3;border-radius:7px 7px 0 0"></div>
<div class="t" style="left:825px;top:142px;font-size:12px;color:#8a8a8a">变量编辑</div>
<div class="a" style="left:1870px;top:142px;width:19px;height:19px;background:#dcdcdc"></div>
<svg style="left:1876px;top:148px" width="7" height="7"><path d="M0 0l7 7M7 0L0 7" stroke="#f4f4f4" stroke-width="1.2"/></svg>
<div class="a" style="left:816px;top:192px;width:1068px;height:1px;background:#fafafa"></div>
<div class="a" style="left:1883px;top:192px;width:1px;height:565px;background:#fafafa"></div>
<div class="a" style="left:1777px;top:226px;width:70px;height:17px;background:linear-gradient(#f2f2f2,#e2e2e2);border:1px solid #9a9a9a;border-left:none"></div>
<div class="t" style="left:1818px;top:229px;font-size:12px">注释</div>
<div class="a" style="left:1777px;top:243px;width:70px;height:447px;background:repeating-linear-gradient(#c6c6c6 0,#c6c6c6 15.2px,#9c9c9c 15.2px,#9c9c9c 16.2px);border-right:1px solid #9a9a9a"></div>
<div class="a" style="left:1777px;top:690px;width:70px;height:31px;background:#838383"></div>
<div class="a" style="left:1777px;top:737px;width:97px;height:20px;border:1px solid #e6e6e6;border-left:none;background:#efefef"></div>
<svg style="left:1857px;top:231px" width="12" height="14"><path d="M6 0l6 6H8.5v7h-5V6H0z" fill="#8c8c8c"/></svg>
<svg style="left:1857px;top:259px" width="12" height="14"><path d="M6 14l6-6H8.5V1h-5v7H0z" fill="#8c8c8c"/></svg>
<div class="t" style="left:1855px;top:285px;font-size:9px;color:#8c8c8c;font-weight:bold">A</div>
<div class="t" style="left:1855px;top:294px;font-size:9px;color:#8c8c8c;font-weight:bold">Z</div>
<svg style="left:1862px;top:284px" width="8" height="20"><path d="M2 1v17M6 3v15M0 16l2 3 2-3M4 4l2-3 2 3" fill="none" stroke="#8c8c8c" stroke-width="1.2"/></svg>
<div class="a" style="left:863px;top:226px;width:5px;height:17px;background:#ececec;border-bottom:1px solid #999"></div>
<div class="a" style="left:863px;top:243px;width:5px;height:447px;background:repeating-linear-gradient(#a8a8a8 0,#a8a8a8 15.2px,#888 15.2px,#888 16.2px)"></div>
<div class="a" style="left:863px;top:690px;width:5px;height:31px;background:#838383"></div>

<!-- login monitor window -->
<div class="a" style="left:14px;top:171px;width:850px;height:682px;background:#f0f0f0;border:1px solid #b2b2b2;border-radius:8px;box-shadow:0 0 10px rgba(0,0,0,.2)"></div>
<div class="a" style="left:15px;top:172px;width:848px;height:30px;background:#f3f3f3;border-radius:8px 8px 0 0"></div>
<svg style="left:24px;top:180px" width="14" height="12"><circle cx="1.5" cy="1.5" r="1.2" fill="none" stroke="#666" stroke-width=".8"/><rect x="4" y="1" width="10" height="1.5" fill="#666"/><rect x="0" y="5" width="3" height="1.6" fill="#1a2f8c"/><rect x="4" y="5" width="10" height="1.6" fill="#1a2f8c"/><path d="M0 9l2.5 2.5M2.5 9L0 11.5" stroke="#2a62c8" stroke-width=".8"/><rect x="4" y="9.5" width="10" height="1.6" fill="#3a7ad8"/></svg>
<div class="t" style="left:45px;top:179px;font-size:12px;color:#8a8a8a">登录监控器</div>
<div class="a" style="left:744px;top:186px;width:10px;height:1px;background:#999"></div>
<div class="a" style="left:789px;top:181px;width:10px;height:10px;border:1px solid #d0d0d0;border-radius:1px"></div>
<svg style="left:835px;top:181px" width="10" height="10"><path d="M0 0l10 10M10 0L0 10" stroke="#777" stroke-width="1"/></svg>
<svg style="left:26px;top:206px" width="17" height="17"><path d="M0 6h6l1-2h4v12H0z" fill="#f6c14a"/><path d="M1 9h15l-2 7H0z" fill="#fcd982"/><path d="M8 6c1-4 6-5 8-1" fill="none" stroke="#3a83d6" stroke-width="2"/><path d="M13 5l4 0-2 4z" fill="#3a83d6"/></svg>
<svg style="left:50px;top:206px" width="17" height="17"><rect x="1" y="1" width="13" height="14" fill="#7b3fb0"/><rect x="3" y="2" width="9" height="5" fill="#fff"/><rect x="4" y="10" width="7" height="5" fill="#fff"/><rect x="6" y="11" width="3" height="4" fill="#7b3fb0"/></svg>
<svg style="left:73px;top:206px" width="17" height="17"><path d="M.5 .5h7l3 3v12h-10z" fill="#fff" stroke="#aaa"/><rect x="5" y="8" width="4" height="7" fill="#666"/><rect x="10" y="8" width="4" height="7" fill="#666"/><rect x="7" y="9" width="5" height="3" fill="#777"/><path d="M1 5h3M1 9h3" stroke="#555"/></svg>
<svg style="left:96px;top:206px" width="17" height="17"><rect x=".5" y=".5" width="11" height="10" fill="#fff" stroke="#777"/><path d="M.5 4h11M4 .5v10M8 .5v10" stroke="#999"/><path d="M7 8l8 8M15 8l-8 8" stroke="#e03030" stroke-width="1.8"/></svg>
<svg style="left:119px;top:206px" width="17" height="17"><rect x=".5" y=".5" width="12" height="11" fill="#fff" stroke="#777"/><path d="M.5 4h12M.5 8h12M4.5 .5v11M8.5 .5v11" stroke="#999"/><path d="M14 6v10M12 13l2 3 2-3" fill="none" stroke="#444" stroke-width="1.2"/></svg>
<svg style="left:142px;top:206px" width="17" height="17"><rect x=".5" y=".5" width="12" height="11" fill="#fff" stroke="#777"/><path d="M.5 4h12M.5 8h12M4.5 .5v11M8.5 .5v11" stroke="#999"/><path d="M14 16V6M12 9l2-3 2 3" fill="none" stroke="#444" stroke-width="1.2"/></svg>
<svg style="left:165px;top:206px" width="17" height="17"><rect x="0" y="2" width="9" height="11" fill="#eee" stroke="#333"/><path d="M2 10l2-6 2 6" fill="none" stroke="#2a62c8"/><rect x="8" y="2" width="8" height="14" fill="#333"/><rect x="10" y="5" width="4" height="3" fill="#999"/><rect x="10" y="10" width="2" height="5" fill="#999"/></svg>
<svg style="left:188px;top:206px" width="17" height="17"><rect x=".5" y=".5" width="11" height="9" fill="#8fd3f4" stroke="#555"/><path d="M3 12h8M8 11v4h7M13 10v6" stroke="#444"/></svg>
<div class="a" style="left:20px;top:226px;width:838px;height:137px;background:#fff;border:1px solid #a0a0a0;border-bottom:none"></div>
<div class="a" style="left:21px;top:227px;width:836px;height:17px;background:#f0f0f0;border-bottom:1px solid #a0a0a0"></div>
<div class="t" style="left:20px;width:120px;text-align:center;top:230px;font-size:12px">程序/单元</div>
<div class="t" style="left:140px;width:180px;text-align:center;top:230px;font-size:12px">软元件</div>
<div class="t" style="left:320px;width:90px;text-align:center;top:230px;font-size:12px">参照目标</div>
<div class="t" style="left:410px;width:90px;text-align:center;top:230px;font-size:12px">当前值</div>
<div class="t" style="left:500px;width:120px;text-align:center;top:230px;font-size:12px">显示格式</div>
<div class="t" style="left:620px;width:30px;text-align:center;top:230px;font-size:12px">接点</div>
<div class="t" style="left:650px;width:207px;text-align:center;top:230px;font-size:12px">注释</div>
<div class="a" style="left:321px;top:245px;width:89px;height:118px;background:#dcdcdc"></div>
<div class="a" style="left:621px;top:245px;width:236px;height:118px;background:#dcdcdc"></div>
<div class="a" style="left:411px;top:347px;width:210px;height:16px;background:#e6e6e6"></div>
<div class="t" style="left:23px;top:248px;font-size:12px">全局</div>
<div class="t" style="left:144px;top:249px;font-size:11.5px">gRcp.Ctrl.siOpearResult[0]</div>
<div class="t" style="left:401px;top:248px;font-size:12px">-</div>
<div class="t" style="left:411px;top:248px;font-size:11.5px;letter-spacing:-.5px">这是一条测试信息</div>
<div class="t" style="left:504px;top:249px;font-size:11.5px">STRING</div>
<div class="t" style="left:23px;top:265px;font-size:12px">全局</div>
<div class="t" style="left:144px;top:266px;font-size:11.5px">DM18400</div>
<div class="t" style="left:401px;top:265px;font-size:12px">-</div>
<div class="t" style="left:411px;width:87px;text-align:right;top:266px;font-size:11.5px">-5953</div>
<div class="t" style="left:502px;top:265px;font-size:12px;letter-spacing:-.5px">有符号 16 位十进制数</div>
<div class="t" style="left:23px;top:282px;font-size:12px">全局</div>
<div class="t" style="left:144px;top:283px;font-size:11.5px">DM18401</div>
<div class="t" style="left:401px;top:282px;font-size:12px">-</div>
<div class="t" style="left:411px;width:87px;text-align:right;top:283px;font-size:11.5px">-26138</div>
<div class="t" style="left:502px;top:282px;font-size:12px;letter-spacing:-.5px">有符号 16 位十进制数</div>
<div class="t" style="left:23px;top:299px;font-size:12px">全局</div>
<div class="t" style="left:144px;top:300px;font-size:11.5px">DM18402</div>
<div class="t" style="left:401px;top:299px;font-size:12px">-</div>
<div class="t" style="left:411px;width:87px;text-align:right;top:300px;font-size:11.5px">-26449</div>
<div class="t" style="left:502px;top:299px;font-size:12px;letter-spacing:-.5px">有符号 16 位十进制数</div>
<div class="t" style="left:23px;top:316px;font-size:12px">全局</div>
<div class="t" style="left:144px;top:317px;font-size:11.5px">DM18403</div>
<div class="t" style="left:401px;top:316px;font-size:12px">-</div>
<div class="t" style="left:411px;width:87px;text-align:right;top:317px;font-size:11.5px">-6984</div>
<div class="t" style="left:502px;top:316px;font-size:12px;letter-spacing:-.5px">有符号 16 位十进制数</div>
<div class="t" style="left:23px;top:333px;font-size:12px">全局</div>
<div class="t" style="left:144px;top:334px;font-size:11.5px">DM18404</div>
<div class="t" style="left:401px;top:333px;font-size:12px">-</div>
<div class="t" style="left:411px;width:87px;text-align:right;top:334px;font-size:11.5px">-32538</div>
<div class="a" style="left:501px;top:330px;width:104px;height:16px;background:#0078d7"></div>
<div class="a" style="left:502px;top:333px;width:102px;overflow:hidden;white-space:nowrap;line-height:1;font-size:12px;color:#fff;letter-spacing:-.5px">有符号 16 位十进制数</div>
<svg style="left:610px;top:336px" width="5" height="3"><path d="M0 0h5L2.5 3z" fill="#555"/></svg>
<div class="a" style="left:21px;top:261px;width:836px;height:1px;background:#e4e4e4"></div>
<div class="a" style="left:21px;top:278px;width:836px;height:1px;background:#e4e4e4"></div>
<div class="a" style="left:21px;top:295px;width:836px;height:1px;background:#e4e4e4"></div>
<div class="a" style="left:21px;top:312px;width:836px;height:1px;background:#e4e4e4"></div>
<div class="a" style="left:21px;top:329px;width:836px;height:1px;background:#e4e4e4"></div>
<div class="a" style="left:21px;top:347px;width:836px;height:1px;background:#e4e4e4"></div>
<div class="a" style="left:21px;top:363px;width:836px;height:1px;background:#e4e4e4"></div>
<div class="a" style="left:140px;top:227px;width:1px;height:136px;background:#d8d8d8"></div>
<div class="a" style="left:320px;top:227px;width:1px;height:136px;background:#d8d8d8"></div>
<div class="a" style="left:410px;top:227px;width:1px;height:136px;background:#d8d8d8"></div>
<div class="a" style="left:500px;top:227px;width:1px;height:136px;background:#d8d8d8"></div>
<div class="a" style="left:620px;top:227px;width:1px;height:136px;background:#d8d8d8"></div>
<div class="a" style="left:650px;top:227px;width:1px;height:136px;background:#d8d8d8"></div>
<div class="a" style="left:140px;top:227px;width:1px;height:17px;background:#a8a8a8"></div>
<div class="a" style="left:320px;top:227px;width:1px;height:17px;background:#a8a8a8"></div>
<div class="a" style="left:410px;top:227px;width:1px;height:17px;background:#a8a8a8"></div>
<div class="a" style="left:500px;top:227px;width:1px;height:17px;background:#a8a8a8"></div>
<div class="a" style="left:620px;top:227px;width:1px;height:17px;background:#a8a8a8"></div>
<div class="a" style="left:650px;top:227px;width:1px;height:17px;background:#a8a8a8"></div>
<div class="a" style="left:20px;top:363px;width:838px;height:484px;background:#838383;border-radius:0 0 6px 0"></div>
<div class="a" style="left:442px;top:261px;width:66px;height:92px;border:3px solid #ec1c24;border-radius:3px"></div>

<!-- simulator window -->
<div class="a" style="left:868px;top:160px;width:910px;height:855px;background:#f0f0f0;border:1px solid #a8a8a8;border-radius:8px 8px 0 0;box-shadow:0 0 12px rgba(0,0,0,.25)"></div>
<div class="a" style="left:868px;top:161px;width:909px;height:30px;background:#f3f3f3;border-radius:8px 8px 0 0"></div>
<svg style="left:877px;top:167px" width="13" height="14"><rect x=".5" y="1.5" width="12" height="12" fill="#f3e7c8" stroke="#444"/><path d="M7 0L3 8h3l-2 6 6-9H7l2-5z" fill="#f0a020" stroke="#c06000" stroke-width=".5"/></svg>
<div class="t" style="left:897px;top:170px;font-size:12px;letter-spacing:-.4px;color:#8a8a8a">GP-Pro EX模拟</div>
<div class="a" style="left:1658px;top:175px;width:10px;height:1px;background:#888"></div>
<div class="a" style="left:1703px;top:170px;width:10px;height:10px;border:1px solid #888;border-radius:1px"></div>
<svg style="left:1749px;top:170px" width="10" height="10"><path d="M0 0l10 10M10 0L0 10" stroke="#777" stroke-width="1"/></svg>
<div class="a" style="left:868px;top:191px;width:909px;height:20px;background:#fff"></div>
<div class="a" style="left:868px;top:211px;width:909px;height:1px;background:#a0a0a0"></div>
<div class="t" style="left:874px;top:195px;font-size:12px;color:#555">模拟 (S)</div>
<div class="t" style="left:931px;top:195px;font-size:12px;color:#555">查看 (V)</div>
<div class="t" style="left:989px;top:195px;font-size:12px;color:#555">选项 (O)</div>
<div class="t" style="left:1049px;top:195px;font-size:12px;color:#555">预览 (W)</div>
<div class="t" style="left:1111px;top:195px;font-size:12px;color:#555">画面捕捉 (C)</div>
<div class="a" style="left:869px;top:213px;width:29px;height:31px;background:repeating-conic-gradient(#e4e4e4 0 25%,#fbfbfb 0 50%) 0 0/2px 2px;border-left:1px solid #b8b8b8;border-top:1px solid #b8b8b8;border-right:1px solid #fff;border-bottom:1px solid #fff"></div>
<div class="a" style="left:899px;top:213px;width:29px;height:31px;background:repeating-conic-gradient(#e4e4e4 0 25%,#fbfbfb 0 50%) 0 0/2px 2px;border-left:1px solid #b8b8b8;border-top:1px solid #b8b8b8;border-right:1px solid #fff;border-bottom:1px solid #fff"></div>
<div class="a" style="left:930px;top:213px;width:29px;height:31px;background:repeating-conic-gradient(#e4e4e4 0 25%,#fbfbfb 0 50%) 0 0/2px 2px;border-left:1px solid #b8b8b8;border-top:1px solid #b8b8b8;border-right:1px solid #fff;border-bottom:1px solid #fff"></div>
<div class="a" style="left:961px;top:213px;width:29px;height:31px;background:repeating-conic-gradient(#e4e4e4 0 25%,#fbfbfb 0 50%) 0 0/2px 2px;border-left:1px solid #b8b8b8;border-top:1px solid #b8b8b8;border-right:1px solid #fff;border-bottom:1px solid #fff"></div>
<svg style="left:871px;top:216px" width="25" height="25"><rect x="1.5" y="2.5" width="14" height="18" fill="#fff" stroke="#222" stroke-width="1.5"/><rect x="3" y="4" width="11" height="3" fill="#333"/><path d="M3.5 9h9M3.5 12h9M3.5 15h6M3.5 18h6" stroke="#222" stroke-width="1.3"/><g><ellipse cx="14.5" cy="17" rx="4.5" ry="5.5" fill="#1a1a1a" transform="rotate(-30 14.5 17)"/><ellipse cx="20" cy="15" rx="4.5" ry="5.5" fill="#2a2a2a" transform="rotate(-30 20 15)"/><ellipse cx="17" cy="11" rx="3" ry="2.5" fill="#444"/><circle cx="12.5" cy="20.5" r="1.6" fill="#3de0e8"/><circle cx="18.5" cy="22" r="1.6" fill="#3de0e8"/><path d="M15 13l4-2" stroke="#777" stroke-width="1"/></g></svg>
<svg style="left:901px;top:216px" width="25" height="25"><path d="M2 3v18M5 3v18M2 6h4M2 11h4M2 16h4M22 3v18M8 7h14M8 12h14" stroke="#2346e0" stroke-width="1.3"/><circle cx="14" cy="7" r="2.5" fill="#fff" stroke="#2346e0"/><g><ellipse cx="14.5" cy="17" rx="4.5" ry="5.5" fill="#1a1a1a" transform="rotate(-30 14.5 17)"/><ellipse cx="20" cy="15" rx="4.5" ry="5.5" fill="#2a2a2a" transform="rotate(-30 20 15)"/><ellipse cx="17" cy="11" rx="3" ry="2.5" fill="#444"/><circle cx="12.5" cy="20.5" r="1.6" fill="#3de0e8"/><circle cx="18.5" cy="22" r="1.6" fill="#3de0e8"/><path d="M15 13l4-2" stroke="#777" stroke-width="1"/></g></svg>
<svg style="left:932px;top:216px" width="25" height="25"><path d="M1 14l9-11 7 5-9 11z" fill="#fff" stroke="#222" stroke-width="1.3"/><path d="M4 10l8-8M6 13l8-8M1 14v4l7 2" fill="none" stroke="#222"/><g><ellipse cx="14.5" cy="17" rx="4.5" ry="5.5" fill="#1a1a1a" transform="rotate(-30 14.5 17)"/><ellipse cx="20" cy="15" rx="4.5" ry="5.5" fill="#2a2a2a" transform="rotate(-30 20 15)"/><ellipse cx="17" cy="11" rx="3" ry="2.5" fill="#444"/><circle cx="12.5" cy="20.5" r="1.6" fill="#3de0e8"/><circle cx="18.5" cy="22" r="1.6" fill="#3de0e8"/><path d="M15 13l4-2" stroke="#777" stroke-width="1"/></g></svg>
<svg style="left:964px;top:216px" width="25" height="25"><rect x="1.5" y="1.5" width="13" height="13" fill="#4de0e0" stroke="#222"/><rect x="4.5" y="4.5" width="13" height="13" fill="#f0f0a0" stroke="#222"/><rect x="7.5" y="7.5" width="14" height="14" fill="#f8c0f0" stroke="#222"/><path d="M11 19V11h7M11 14.5h5" stroke="#000" stroke-width="2.8" fill="none"/></svg>
<div class="a" style="left:993px;top:216px;width:1px;height:26px;background:#999"></div>
<svg style="left:1003px;top:219px" width="18" height="18"><rect x="1" y="1" width="16" height="16" fill="#fff" stroke="#2346e0" stroke-width="2"/><rect x="2" y="2" width="14" height="6" fill="#7a9cf0"/><path d="M1 9h16" stroke="#2346e0" stroke-width="2"/></svg>
<svg style="left:1034px;top:219px" width="18" height="18"><rect x="1" y="1" width="16" height="16" fill="#fff" stroke="#2346e0" stroke-width="2"/><rect x="2" y="2" width="6" height="14" fill="#7a9cf0"/><path d="M9 1v16" stroke="#2346e0" stroke-width="2"/></svg>
<div class="a" style="left:1061px;top:216px;width:1px;height:26px;background:#999"></div>
<svg style="left:1067px;top:216px" width="22" height="24"><path d="M3 22V8l6-6 3 3v17z" fill="#ddd" stroke="#222" stroke-width="1.5"/><rect x="11" y="10" width="9" height="10" fill="#f0f0f0" stroke="#888" stroke-width="1.5"/></svg>
<svg style="left:1098px;top:218px" width="24" height="20"><rect x="1" y="4" width="22" height="15" rx="2" fill="#111"/><rect x="7" y="1" width="10" height="4" fill="#111"/><circle cx="12" cy="11.5" r="5" fill="#222" stroke="#666"/><circle cx="12" cy="11.5" r="3" fill="#9bd"/></svg>
<svg style="left:1131px;top:220px" width="20" height="18"><rect x="1" y="1" width="16" height="11" fill="#8ec8f0"/><rect x="1" y="8" width="16" height="4" fill="#5a5"/><path d="M8 10h11v7H8z" fill="#f4d070" stroke="#a88030" stroke-width=".8"/></svg>
<svg style="left:1160px;top:216px" width="26" height="24"><rect x="1" y="7" width="17" height="11" fill="#111"/><path d="M3 5v2M6 5v2M9 5v2M12 5v2M15 5v2M3 18v2M6 18v2M9 18v2M12 18v2M15 18v2" stroke="#d8b020" stroke-width="1.5"/><path d="M21 2c-3 1-3 5 0 6v14M21 2c3 1 3 5 0 6" fill="none" stroke="#444" stroke-width="2"/></svg>
<div class="a" style="left:1192px;top:216px;width:1px;height:26px;background:#999"></div>
<svg style="left:1202px;top:216px" width="16" height="24"><path d="M1 2l12-1v22L1 21z" fill="#1a5cc8" stroke="#0a2a70"/><circle cx="10" cy="12" r="1.5" fill="#f0c000"/></svg>
<!-- screen area frame -->
<div class="a" style="left:869px;top:246px;width:905px;height:2px;background:#909090"></div>
<div class="a" style="left:870px;top:248px;width:903px;height:326px;background:#f0f0f0"></div>
<div class="a" style="left:871px;top:248px;width:889px;height:309px;background:#fff"></div>
<div class="a" style="left:873px;top:250px;width:885px;height:305px;background:#000"></div>
<div class="a" style="left:954px;top:410px;width:799px;height:16px;background:#0000ff"></div>
<div class="t" style="left:955px;top:410px;font-size:16px;font-weight:300;color:#ffff00;letter-spacing:-.2px">这是一条测试信息</div>
<div class="a" style="left:989px;top:448px;width:48px;height:107px;background:#0000ff;overflow:hidden">
<div style="position:absolute;right:0;top:1px;height:24px;line-height:24px;font-family:'Liberation Mono';font-size:13.4px;color:#ff0;transform:scaleY(2.5);transform-origin:right center;letter-spacing:-.05px;white-space:nowrap">-7467</div>
<div style="position:absolute;right:0;top:25px;height:24px;line-height:24px;font-family:'Liberation Mono';font-size:13.4px;color:#ff0;transform:scaleY(2.5);transform-origin:right center;letter-spacing:-.05px;white-space:nowrap">-14390</div>
<div style="position:absolute;right:0;top:49px;height:24px;line-height:24px;font-family:'Liberation Mono';font-size:13.4px;color:#ff0;transform:scaleY(2.5);transform-origin:right center;letter-spacing:-.05px;white-space:nowrap">-17454</div>
<div style="position:absolute;right:0;top:73px;height:24px;line-height:24px;font-family:'Liberation Mono';font-size:13.4px;color:#ff0;transform:scaleY(2.5);transform-origin:right center;letter-spacing:-.05px;white-space:nowrap">-2612</div>
<div style="position:absolute;right:0;top:97px;height:24px;line-height:24px;font-family:'Liberation Mono';font-size:13.4px;color:#ff0;transform:scaleY(2.5);transform-origin:right center;letter-spacing:-.05px;white-space:nowrap">-7502</div>
</div>
<div class="a" style="left:1766px;top:262px;width:2px;height:106px;background:#8a8a8a"></div>
<div class="a" style="left:886px;top:562px;width:589px;height:2px;background:#8a8a8a"></div>
<!-- view header -->
<div class="a" style="left:870px;top:575px;width:903px;height:16px;background:#c3d0de;border-top:1px solid #dde6ef"></div>
<div class="t" style="left:1310px;top:576px;font-size:12px">视图</div>
<div class="a" style="left:875px;top:598px;width:896px;height:363px;border:2px solid #8a8a8a;border-right-color:#6a6a6a;background:#f0f0f0"></div>
<div class="a" style="left:877px;top:600px;width:155px;height:340px;border-right:1px solid #a0a0a0;border-bottom:1px solid #a0a0a0"></div>
<div class="a" style="left:879px;top:602px;width:150px;height:16px;background:#c3d0de"></div>
<div class="t" style="left:940px;top:604px;font-size:12px">对象</div>
<div class="a" style="left:879px;top:619px;width:150px;height:317px;background:#fff;border:1px solid #8a8a8a"></div>
<div class="a" style="left:880px;top:620px;width:138px;height:315px;background:#f3f3f3"></div>
<div class="a" style="left:880px;top:620px;width:134px;height:315px;background:#fff;overflow:hidden"></div>
<div class="a" style="left:880px;top:621px;width:131px;height:20px;background:#ececec"></div>
<div class="a" style="left:1019px;top:645px;width:2px;height:100px;background:#8a8a8a"></div>
<div class="t" style="left:882px;top:624px;font-size:12px">当前画面</div>
<div class="t" style="left:882px;top:644px;font-size:12px">系统区</div>
<div class="t" style="left:882px;top:664px;font-size:12px">控制器 / PLC</div>
<div class="t" style="left:882px;top:684px;font-size:12px">所有项目</div>
<div class="t" style="left:901px;top:704px;font-size:12px">基本画面</div>
<div class="t" style="left:901px;top:724px;font-size:12px">窗口画面</div>
<div class="t" style="left:901px;top:744px;font-size:12px">视频模块窗口画面</div>
<div class="t" style="left:901px;top:764px;font-size:12px">页眉/页脚</div>
<div class="t" style="left:901px;top:784px;font-size:12px">报警</div>
<div class="t" style="left:901px;top:804px;font-size:12px">采样设置</div>
<div class="t" style="left:901px;top:824px;font-size:12px">扩展配方设置</div>
<div class="t" style="left:901px;top:844px;font-size:12px">配方设置</div>
<div class="t" style="left:901px;top:864px;font-size:12px">安全设置</div>
<div class="t" style="left:901px;top:884px;font-size:12px">操作日志设置</div>
<div class="t" style="left:901px;top:904px;font-size:12px">时间表设置</div>
<div class="t" style="left:901px;top:924px;font-size:12px">全局触发设置</div>

<div class="t" style="left:1036px;top:611px;font-size:12px">编号</div>
<div class="a" style="left:1105px;top:605px;width:59px;height:22px;background:#fff;border:1px solid #999"></div>
<div class="t" style="left:1109px;top:611px;font-size:12.5px">1</div>
<div class="a" style="left:1170px;top:605px;width:18px;height:22px;border:1px solid #888;background:#efefef"></div>
<div class="a" style="left:1189px;top:605px;width:18px;height:22px;border:1px solid #888;background:#efefef"></div>
<svg style="left:1174px;top:611px" width="10" height="10"><path d="M9 0v10L4 5zM4 0v10L0 5z" fill="#aaa"/></svg>
<svg style="left:1193px;top:611px" width="10" height="10"><path d="M1 0v10l5-5zM6 0v10l4-5z" fill="#aaa"/></svg>
<div class="t" style="left:1214px;top:611px;font-size:12px;color:#1a6ad0">打开画面</div>
<div class="t" style="left:1284px;top:611px;font-size:12px">搜索选项</div>
<div class="a" style="left:1363px;top:605px;width:110px;height:22px;background:#fff;border:1px solid #999"></div>
<svg style="left:1366px;top:607px" width="16" height="16"><circle cx="10" cy="6" r="4.5" fill="#cde" stroke="#777" stroke-width="1.5"/><path d="M7 9l-6 6" stroke="#c07020" stroke-width="2.5"/></svg>
<div class="a" style="left:1040px;top:631px;width:725px;height:1px;background:#b0b0b0"></div>
<div class="a" style="left:1036px;top:638px;width:127px;height:19px;background:#fff;border:2px solid #8a8a8a;border-right-color:#e0e0e0;border-bottom-color:#e0e0e0"></div>
<div class="a" style="left:1144px;top:640px;width:17px;height:15px;background:#f0f0f0;border:1px solid #fff;border-right-color:#777;border-bottom-color:#777"></div>
<svg style="left:1148px;top:645px" width="9" height="5"><path d="M0 0h9L4.5 5z" fill="#000"/></svg>
<div class="t" style="left:1039px;top:641px;font-size:12px;font-family:'Liberation Serif';">所有控制器/PLC</div>
<div class="a" style="left:1168px;top:638px;width:108px;height:19px;background:#fff;border:2px solid #8a8a8a;border-right-color:#e0e0e0;border-bottom-color:#e0e0e0"></div>
<div class="a" style="left:1257px;top:640px;width:17px;height:15px;background:#f0f0f0;border:1px solid #fff;border-right-color:#777;border-bottom-color:#777"></div>
<svg style="left:1261px;top:645px" width="9" height="5"><path d="M0 0h9L4.5 5z" fill="#000"/></svg>
<div class="t" style="left:1171px;top:641px;font-size:12px;">所有类型</div>
<div class="a" style="left:1281px;top:638px;width:88px;height:19px;background:#fff;border:2px solid #8a8a8a;border-right-color:#e0e0e0;border-bottom-color:#e0e0e0"></div>
<div class="a" style="left:1350px;top:640px;width:17px;height:15px;background:#f0f0f0;border:1px solid #fff;border-right-color:#777;border-bottom-color:#777"></div>
<svg style="left:1354px;top:645px" width="9" height="5"><path d="M0 0h9L4.5 5z" fill="#000"/></svg>
<div class="t" style="left:1284px;top:641px;font-size:12.5px;font-family:'Liberation Mono';">Dec (+/-)</div>
<div class="a" style="left:1435px;top:638px;width:78px;height:19px;background:#fff;border:2px solid #8a8a8a;border-right-color:#e0e0e0;border-bottom-color:#e0e0e0"></div>
<div class="a" style="left:1494px;top:640px;width:17px;height:15px;background:#f0f0f0;border:1px solid #fff;border-right-color:#777;border-bottom-color:#777"></div>
<svg style="left:1498px;top:645px" width="9" height="5"><path d="M0 0h9L4.5 5z" fill="#000"/></svg>
<div class="t" style="left:1438px;top:641px;font-size:12px;">直接文本</div>
<div class="a" style="left:1643px;top:638px;width:92px;height:19px;background:#fff;border:2px solid #8a8a8a;border-right-color:#e0e0e0;border-bottom-color:#e0e0e0"></div>
<div class="a" style="left:1716px;top:640px;width:17px;height:15px;background:#f0f0f0;border:1px solid #fff;border-right-color:#777;border-bottom-color:#777"></div>
<svg style="left:1720px;top:645px" width="9" height="5"><path d="M0 0h9L4.5 5z" fill="#000"/></svg>
<div class="t" style="left:1646px;top:641px;font-size:12px;">中文(简体)</div>
<div class="t" style="left:1377px;top:641px;font-size:12px">输入模式</div>
<div class="t" style="left:1549px;top:641px;font-size:12px">编辑文本的语言</div>
<div class="a" style="left:1033px;top:667px;width:736px;height:2px;background:#8a8a8a"></div>
<div class="a" style="left:1033px;top:671px;width:735px;height:268px;background:#f0f0f0"></div>
<div class="a" style="left:1035px;top:692px;width:715px;height:230px;background:#fff"></div>
<div class="a" style="left:1035px;top:671px;width:715px;height:21px;background:#f0f0f0;border-top:1px solid #c8c8c8;border-bottom:2px solid #8a8a8a"></div>
<div class="a" style="left:1193px;top:672px;width:2px;height:19px;background:#9a9a9a"></div>
<div class="a" style="left:1263px;top:672px;width:2px;height:19px;background:#9a9a9a"></div>
<div class="a" style="left:1472px;top:672px;width:2px;height:19px;background:#9a9a9a"></div>
<div class="a" style="left:1594px;top:672px;width:2px;height:19px;background:#9a9a9a"></div>
<div class="t" style="left:1041px;top:676px;font-size:12px">画面</div>
<div class="t" style="left:1199px;top:676px;font-size:12.5px">ID/编号/...</div>
<div class="t" style="left:1269px;top:676px;font-size:12px">功能</div>
<div class="t" style="left:1479px;top:676px;font-size:12px">地址</div>
<div class="t" style="left:1600px;top:676px;font-size:12px">状态</div>
<div class="a" style="left:1035px;top:693px;width:715px;height:18px;background:#f0f0f0"></div>
<div class="a" style="left:1035px;top:922px;width:715px;height:17px;background:#f0f0f0;overflow:hidden"></div>
<div class="a" style="left:1035px;top:693px;width:715px;height:229px;overflow:hidden">
<div class="t" style="left:18px;top:4px;font-size:12px">基本1</div>
<div class="t" style="left:164px;top:4px;font-size:12.5px">DD_0000</div>
<div class="t" style="left:234px;top:4px;font-size:12px">监控字地址</div>
<div class="t" style="left:444px;top:4px;font-size:12.5px">[PLC1]DM00000</div>
<div class="t" style="left:563px;top:4px;font-size:12px">这是一条测试信息</div>
<div class="a" style="left:0;top:17px;width:715px;height:1px;background:#ededed"></div>
<div class="t" style="left:18px;top:22px;font-size:12px">基本1</div>
<div class="t" style="left:164px;top:22px;font-size:12.5px">DD_0001</div>
<div class="t" style="left:234px;top:22px;font-size:12px">监控字地址</div>
<div class="t" style="left:444px;top:22px;font-size:12.5px">[PLC1]DM00000</div>
<div class="t" style="left:563px;top:22px;font-size:12.5px">-7467</div>
<div class="a" style="left:0;top:35px;width:715px;height:1px;background:#ededed"></div>
<div class="t" style="left:18px;top:40px;font-size:12px">基本1</div>
<div class="t" style="left:164px;top:40px;font-size:12.5px">DD_0002</div>
<div class="t" style="left:234px;top:40px;font-size:12px">监控字地址</div>
<div class="t" style="left:444px;top:40px;font-size:12.5px">[PLC1]DM00001</div>
<div class="t" style="left:563px;top:40px;font-size:12.5px">-14390</div>
<div class="a" style="left:0;top:53px;width:715px;height:1px;background:#ededed"></div>
<div class="t" style="left:18px;top:58px;font-size:12px">基本1</div>
<div class="t" style="left:164px;top:58px;font-size:12.5px">DD_0003</div>
<div class="t" style="left:234px;top:58px;font-size:12px">监控字地址</div>
<div class="t" style="left:444px;top:58px;font-size:12.5px">[PLC1]DM00002</div>
<div class="a" style="left:0;top:71px;width:715px;height:1px;background:#ededed"></div>
<div class="t" style="left:18px;top:76px;font-size:12px">基本1</div>
<div class="t" style="left:164px;top:76px;font-size:12.5px">DD_0004</div>
<div class="t" style="left:234px;top:76px;font-size:12px">监控字地址</div>
<div class="t" style="left:444px;top:76px;font-size:12.5px">[PLC1]DM00003</div>
<div class="t" style="left:563px;top:76px;font-size:12.5px">-2612</div>
<div class="a" style="left:0;top:89px;width:715px;height:1px;background:#ededed"></div>
<div class="t" style="left:18px;top:94px;font-size:12px">基本1</div>
<div class="t" style="left:164px;top:94px;font-size:12.5px">DD_0005</div>
<div class="t" style="left:234px;top:94px;font-size:12px">监控字地址</div>
<div class="t" style="left:444px;top:94px;font-size:12.5px">[PLC1]DM00004</div>
<div class="t" style="left:563px;top:94px;font-size:12.5px">-7502</div>
<div class="a" style="left:0;top:107px;width:715px;height:1px;background:#ededed"></div>
<div class="t" style="left:18px;top:112px;font-size:12px">基本1</div>
<div class="t" style="left:164px;top:112px;font-size:12.5px">DD_0006</div>
<div class="t" style="left:234px;top:112px;font-size:12px">监控字地址</div>
<div class="t" style="left:444px;top:112px;font-size:12.5px">[PLC1]DM00005</div>
<div class="t" style="left:563px;top:112px;font-size:12.5px">-11062</div>
<div class="a" style="left:0;top:125px;width:715px;height:1px;background:#ededed"></div>
<div class="t" style="left:18px;top:130px;font-size:12px">基本1</div>
<div class="t" style="left:164px;top:130px;font-size:12.5px">DD_0007</div>
<div class="t" style="left:234px;top:130px;font-size:12px">监控字地址</div>
<div class="t" style="left:444px;top:130px;font-size:12.5px">[PLC1]DM00006</div>
<div class="t" style="left:563px;top:130px;font-size:12.5px">-14896</div>
<div class="a" style="left:0;top:143px;width:715px;height:1px;background:#ededed"></div>
<div class="t" style="left:18px;top:148px;font-size:12px">基本1</div>
<div class="t" style="left:164px;top:148px;font-size:12.5px">DD_0008</div>
<div class="t" style="left:234px;top:148px;font-size:12px">监控字地址</div>
<div class="t" style="left:444px;top:148px;font-size:12.5px">[PLC1]DM00007</div>
<div class="t" style="left:563px;top:148px;font-size:12.5px">-23857</div>
<div class="a" style="left:0;top:161px;width:715px;height:1px;background:#ededed"></div>
<div class="t" style="left:18px;top:166px;font-size:12px">基本1</div>
<div class="t" style="left:164px;top:166px;font-size:12.5px">DD_0009</div>
<div class="t" style="left:234px;top:166px;font-size:12px">监控字地址</div>
<div class="t" style="left:444px;top:166px;font-size:12.5px">[PLC1]DM00008</div>
<div class="t" style="left:563px;top:166px;font-size:12.5px">0</div>
<div class="a" style="left:0;top:179px;width:715px;height:1px;background:#ededed"></div>
<div class="t" style="left:18px;top:184px;font-size:12px">基本1</div>
<div class="t" style="left:164px;top:184px;font-size:12.5px">DD_0010</div>
<div class="t" style="left:234px;top:184px;font-size:12px">监控字地址</div>
<div class="t" style="left:444px;top:184px;font-size:12.5px">[PLC1]DM00009</div>
<div class="t" style="left:563px;top:184px;font-size:12.5px">0</div>
<div class="a" style="left:0;top:197px;width:715px;height:1px;background:#ededed"></div>
<div class="t" style="left:18px;top:202px;font-size:12px">基本1</div>
<div class="t" style="left:164px;top:202px;font-size:12.5px">DD_0011</div>
<div class="t" style="left:234px;top:202px;font-size:12px">监控字地址</div>
<div class="t" style="left:444px;top:202px;font-size:12.5px">[PLC1]DM00010</div>
<div class="t" style="left:563px;top:202px;font-size:12.5px">0</div>
<div class="a" style="left:0;top:215px;width:715px;height:1px;background:#ededed"></div>
<div class="t" style="left:18px;top:220px;font-size:12px">基本1</div>
<div class="t" style="left:164px;top:220px;font-size:12.5px">DD_0012</div>
<div class="t" style="left:234px;top:220px;font-size:12px">监控字地址</div>
<div class="t" style="left:444px;top:220px;font-size:12.5px">[PLC1]DM00011</div>
<div class="t" style="left:563px;top:220px;font-size:12.5px">0</div>
<div class="a" style="left:0;top:233px;width:715px;height:1px;background:#ededed"></div>
</div>
<div class="a" style="left:879px;top:935px;width:150px;height:5px;background:#f0f0f0;border-top:1px solid #8a8a8a"></div>
<div class="a" style="left:1757px;top:690px;width:2px;height:120px;background:#8a8a8a"></div>
<div class="a" style="left:1050px;top:930px;width:485px;height:2px;background:#8a8a8a"></div>
<div class="a" style="left:1583px;top:711px;width:85px;height:165px;border:3px solid #ec1c24;border-radius:3px"></div>
<div class="a" style="left:877px;top:940px;width:892px;height:1px;background:#c8c8c8"></div>
<div class="t" style="left:877px;top:945px;font-size:12px">从模拟器中获得当前值</div>
<!-- bottom tabs -->
<div class="a" style="left:870px;top:990px;width:903px;height:2px;background:#8a8a8a"></div>
<div class="a" style="left:969px;top:969px;width:94px;height:21px;border:1px solid #777;border-bottom:none;border-radius:3px 3px 0 0;background:#f0f0f0"></div>
<div class="a" style="left:1065px;top:969px;width:94px;height:21px;border:1px solid #777;border-bottom:none;border-radius:3px 3px 0 0;background:#f0f0f0"></div>
<div class="a" style="left:1160px;top:969px;width:95px;height:21px;border:1px solid #777;border-bottom:none;border-radius:3px 3px 0 0;background:#f0f0f0"></div>
<div class="a" style="left:871px;top:968px;width:98px;height:24px;background:#f0f0f0"></div>
<svg style="left:897px;top:973px" width="16" height="16"><rect x="1.5" y="1.5" width="10" height="12" fill="#fff" stroke="#222" stroke-width="1.3"/><path d="M3 5h7M3 8h7M3 11h5" stroke="#222"/><circle cx="12" cy="13" r="3" fill="#333"/></svg>
<div class="t" style="left:920px;top:973px;font-size:12px">地址</div>
<svg style="left:993px;top:972px" width="16" height="16"><path d="M1 1v14M15 1v14M1 4h14M1 9h14" stroke="#222" stroke-width="1.5"/><circle cx="9" cy="11" r="3.5" fill="#333"/></svg>
<div class="t" style="left:1015px;top:972px;font-size:12px">逻辑</div>
<svg style="left:1074px;top:972px" width="16" height="16"><path d="M2 10l7-8 5 4-7 8z" fill="#fff" stroke="#222" stroke-width="1.3"/><circle cx="11" cy="12" r="3.5" fill="#333"/></svg>
<div class="t" style="left:1096px;top:972px;font-size:12px">输入/输出</div>
<svg style="left:1186px;top:972px" width="16" height="16"><rect x="1.5" y="1.5" width="10" height="12" fill="#fff" stroke="#222"/><rect x="4.5" y="3.5" width="10" height="12" fill="#fff" stroke="#222"/><path d="M8 13V7h4M8 10h3" stroke="#222" stroke-width="1.5" fill="none"/></svg>
<div class="t" style="left:1206px;top:972px;font-size:12px">函数</div>
<!-- sim status bar -->
<div class="a" style="left:868px;top:995px;width:909px;height:1px;background:#c8c8c8"></div>
<div class="t" style="left:869px;top:1000px;font-size:12px">就绪</div>
<div class="a" style="left:1519px;top:998px;width:56px;height:16px;border:1px solid #c8c8c8;border-bottom:none"></div>
<div class="t" style="left:1521px;top:1000px;font-size:12.5px">RUN</div>
<div class="a" style="left:1577px;top:998px;width:180px;height:16px;border:1px solid #c8c8c8;border-bottom:none"></div>
<div class="t" style="left:1580px;top:1000px;font-size:12.5px">ST-6600WA WXGA (1280*800)</div>
<svg style="left:1764px;top:1002px" width="12" height="12"><path d="M11 1L1 11M11 5L5 11M11 9L9 11" stroke="#a0a0a0"/></svg>

<!-- GP-Pro EX window -->
<div class="a" style="left:-2px;top:396px;width:775px;height:592px;background:#f7f7f7;border:2px solid #8f8bd8;border-left:none;border-radius:0 8px 0 0;box-shadow:0 0 10px rgba(0,0,0,.3)"></div>
<div class="a" style="left:0;top:396px;width:773px;height:31px;background:#8f8bd8;border-radius:0 8px 0 0"></div>
<svg style="left:0;top:404px" width="14" height="14"><path d="M0 2h9l3 3H0z" fill="#5ab0e0"/><path d="M0 6h12v6H0z" fill="#e0e0f0" stroke="#557" stroke-width=".6"/><circle cx="9" cy="3" r="2" fill="#f060a0"/><path d="M2 9h8" stroke="#30a060" stroke-width="1.5"/></svg>
<div class="t" style="left:18px;top:405px;font-size:12px;letter-spacing:-.5px;color:#111">GP-Pro EX</div>
<div class="a" style="left:652px;top:411px;width:11px;height:1px;background:#111"></div>
<div class="a" style="left:697px;top:405px;width:11px;height:11px;border:1.2px solid #111;border-radius:1px"></div>
<svg style="left:743px;top:405px" width="11" height="11"><path d="M0 0l11 11M11 0L0 11" stroke="#111" stroke-width="1.1"/></svg>
<div class="a" style="left:0;top:427px;width:772px;height:25px;background:#f9f9f9"></div>
<div class="t" style="left:3px;top:434px;font-size:12px">工程(F)</div>
<div class="t" style="left:61px;top:434px;font-size:12px">编辑(E)</div>
<div class="t" style="left:120px;top:434px;font-size:12px">查看(V)</div>
<div class="t" style="left:180px;top:434px;font-size:12px">通用设置(R)</div>
<div class="t" style="left:264px;top:434px;font-size:12px">绘图(D)</div>
<div class="t" style="left:325px;top:434px;font-size:12px">部件(P)</div>
<div class="t" style="left:384px;top:434px;font-size:12px">画面(S)</div>
<div class="t" style="left:443px;top:434px;font-size:12px">画面捕捉(C)</div>
<div class="t" style="left:527px;top:434px;font-size:12px">帮助(H)</div>
<div class="a" style="left:0;top:452px;width:772px;height:101px;background:#f7f7f7"></div>
<div class="a" style="left:0;top:453px;width:286px;height:22px;background:#fbfbfb"></div>
<div class="a" style="left:0;top:477px;width:772px;height:24px;background:#f4f4f4"></div>
<div class="a" style="left:0;top:502px;width:772px;height:24px;background:#f4f4f4"></div>
<div class="a" style="left:0;top:527px;width:238px;height:24px;background:#f4f4f4"></div>
<div class="a" style="left:0;top:453px;width:52px;height:22px;border:1px solid #3a7ad8;background:#f4f8fd"></div>
<svg style="left:3px;top:456px" width="16" height="16"><path d="M1 1l14 14M15 1L1 15" stroke="#6a9a40" stroke-width="2"/><circle cx="5" cy="5" r="2.5" fill="#f0a0c0"/><circle cx="11" cy="4" r="2" fill="#a0c0f0"/><circle cx="14" cy="14" r="2" fill="#e0a020"/></svg>
<div class="t" style="left:21px;top:458px;font-size:12px">编辑</div>
<svg style="left:54px;top:458px" width="16" height="13"><rect x=".5" y=".5" width="15" height="12" fill="#3aa0d8" stroke="#1a6090"/><ellipse cx="8" cy="6.5" rx="4" ry="3" fill="#e0f0f8"/><circle cx="8" cy="6.5" r="2" fill="#553"/></svg>
<div class="t" style="left:73px;top:458px;font-size:12px">预览</div>
<svg style="left:106px;top:458px" width="16" height="13"><rect x=".5" y=".5" width="15" height="12" fill="#3aa0d8" stroke="#1a6090"/><path d="M5 2.5v8l7-4z" fill="#7de07d"/></svg>
<div class="t" style="left:125px;top:458px;font-size:12px">模拟</div>
<svg style="left:158px;top:458px" width="16" height="13"><rect x=".5" y=".5" width="15" height="12" fill="#3aa0d8" stroke="#1a6090"/><path d="M4 5a4 3 0 018 0M12 8a4 3 0 01-8 0" fill="none" stroke="#f0c020" stroke-width="1.8"/></svg>
<div class="t" style="left:177px;top:458px;font-size:12px">传输工程</div>
<svg style="left:234px;top:458px" width="16" height="13"><rect x=".5" y=".5" width="15" height="12" fill="#3aa0d8" stroke="#1a6090"/><path d="M9 1L5 7h3l-2 5 5-7H8z" fill="#f0e040"/></svg>
<div class="t" style="left:253px;top:458px;font-size:12px">监控</div>
<svg style="left:4px;top:481px" width="15" height="16"><path d="M.5 2.5h11l2 2v11H.5z" fill="#eee" stroke="#888"/><text x="1" y="6" font-size="5" fill="#3a7ad8" font-weight="bold" font-family="Liberation Sans">NEW</text></svg>
<svg style="left:26px;top:482px" width="17" height="14"><path d="M0 2h6l1 2h7v10H0z" fill="#c0a040"/><path d="M2 6h15l-3 8H0z" fill="#f4e080"/></svg>
<svg style="left:50px;top:481px" width="15" height="15"><rect x=".5" y=".5" width="14" height="14" fill="#2a5cc0"/><rect x="2" y="1" width="11" height="5" fill="#fff"/><rect x="2" y="1" width="11" height="2" fill="#e03030"/><rect x="4" y="9" width="7" height="6" fill="#333"/><rect x="6" y="10" width="3" height="4" fill="#ddd"/></svg>
<div class="a" style="left:72px;top:481px;width:1px;height:16px;background:#b8b8b8"></div>
<svg style="left:77px;top:482px" width="18" height="14"><rect x="4" y="0" width="10" height="4" fill="#f0f0f0" stroke="#999" stroke-width=".5"/><rect x="0" y="4" width="18" height="6" fill="#233"/><rect x="2" y="6" width="14" height="2" fill="#3a9ad0"/><rect x="3" y="10" width="12" height="4" fill="#eee"/></svg>
<svg style="left:101px;top:481px" width="16" height="16"><rect x=".5" y=".5" width="14" height="15" fill="#f4f4f4" stroke="#aaa"/><circle cx="8" cy="8" r="4" fill="#cde8f8" stroke="#357" stroke-width="1.2"/><path d="M11 11l4 4" stroke="#333" stroke-width="2"/></svg>
<div class="a" style="left:125px;top:481px;width:1px;height:16px;background:#b8b8b8"></div>
<svg style="left:131px;top:481px" width="16" height="16"><path d="M2 15V5l4-4 2 2v12z" fill="#ccc" stroke="#111" stroke-width="1.2"/><rect x="8" y="7" width="7" height="7" fill="#f4f4f4" stroke="#888"/></svg>
<svg style="left:152px;top:481px" width="18" height="15"><rect x="0" y="3" width="18" height="12" rx="3" fill="#111"/><rect x="5" y="0" width="8" height="4" fill="#111"/><circle cx="9" cy="9" r="4" fill="#7aa0e0"/></svg>
<div class="a" style="left:176px;top:481px;width:1px;height:16px;background:#b8b8b8"></div>
<svg style="left:181px;top:481px" width="16" height="16"><path d="M.5 5.5h15v9H.5z" fill="#3a8ad8" stroke="#1a5aa0"/><rect x="2" y="7" width="12" height="4" fill="#9ad0f8"/><text x="2" y="5" font-size="5" fill="#3a7ad8" font-weight="bold" font-family="Liberation Sans">NEW</text></svg>
<svg style="left:204px;top:482px" width="18" height="16"><rect x=".5" y=".5" width="15" height="11" fill="#3a8ad8" stroke="#1a5aa0"/><rect x="2" y="2" width="12" height="6" fill="#9ad0f8"/><rect x="8" y="9" width="9" height="6" fill="#f4d070" stroke="#a88030" stroke-width=".6"/></svg>
<div class="a" style="left:229px;top:481px;width:1px;height:16px;background:#b8b8b8"></div>
<svg style="left:234px;top:482px" width="16" height="14"><rect x="0" y="4" width="16" height="10" fill="#d0d0d0" stroke="#bbb"/><path d="M3 7l5-5 5 5" fill="#e0e0e0" stroke="#bbb"/></svg>
<svg style="left:257px;top:482px" width="16" height="14"><rect x="0" y="4" width="16" height="10" fill="#d0d0d0" stroke="#bbb"/><path d="M3 7l5-5 5 5" fill="#e0e0e0" stroke="#bbb"/></svg>
<div class="a" style="left:280px;top:481px;width:1px;height:16px;background:#b8b8b8"></div>
<svg style="left:286px;top:481px" width="16" height="16"><path d="M5 5.2A5 5 0 1 1 9.5 13.8" fill="none" stroke="#1a5a9a" stroke-width="4.2"/><path d="M5 5.2A5 5 0 1 1 9.5 13.8" fill="none" stroke="#6cc8f4" stroke-width="2.6"/><path d="M0 3v10l7.5-5z" fill="#4ab0ec" stroke="#1a5a9a" stroke-width=".8"/></svg>
<svg style="left:309px;top:481px" width="16" height="16"><path d="M11 5.2A5 5 0 1 0 6.5 13.8" fill="none" stroke="#c4c4c4" stroke-width="4"/><path d="M16 3v10l-7.5-5z" fill="#c8c8c8"/></svg>
<div class="a" style="left:332px;top:481px;width:1px;height:16px;background:#b8b8b8"></div>
<svg style="left:338px;top:481px" width="15" height="16"><path d="M3 1l8 10M12 1L4 11" stroke="#aaa" stroke-width="2"/><circle cx="3.5" cy="13" r="2.5" fill="none" stroke="#aaa" stroke-width="2"/><circle cx="11.5" cy="13" r="2.5" fill="none" stroke="#aaa" stroke-width="2"/></svg>
<svg style="left:361px;top:481px" width="16" height="16"><rect x=".5" y=".5" width="10" height="10" fill="#e0e0e0" stroke="#bbb"/><rect x="5.5" y="5.5" width="10" height="10" fill="#e0e0e0" stroke="#bbb"/></svg>
<svg style="left:384px;top:481px" width="16" height="16"><rect x="0" y="2" width="10" height="13" fill="#d0d0d0"/><rect x="6" y="6" width="9" height="10" fill="#e6e6e6" stroke="#ccc"/></svg>
<svg style="left:407px;top:481px" width="16" height="16"><rect x=".5" y="2.5" width="10" height="10" fill="#e0e0e0" stroke="#bbb"/><rect x="5.5" y="5.5" width="10" height="10" fill="#e0e0e0" stroke="#bbb"/></svg>
<svg style="left:431px;top:482px" width="14" height="14"><path d="M1 1l12 12M13 1L1 13" stroke="#aaa" stroke-width="2.5"/></svg>
<div class="a" style="left:453px;top:481px;width:1px;height:16px;background:#b8b8b8"></div>
<svg style="left:458px;top:481px" width="18" height="17"><text x="1" y="6" font-size="6" fill="#3a6ad0" font-family="Liberation Sans">Err</text><path d="M1 10l5 5 11-10" fill="none" stroke="#3cb040" stroke-width="2.5"/></svg>
<div class="a" style="left:483px;top:481px;width:1px;height:16px;background:#b8b8b8"></div>
<div class="a" style="left:486px;top:477px;width:121px;height:24px;background:#fff"></div>
<div class="a" style="left:594px;top:477px;width:13px;height:24px;background:#f8f8f8"></div>
<div class="t" style="left:490px;top:483px;font-size:12px">100%</div>
<svg style="left:597px;top:488px" width="7" height="4"><path d="M0 0h7L3.5 4z" fill="#111"/></svg>
<svg style="left:611px;top:482px" width="16" height="14"><rect x=".5" y=".5" width="15" height="12" fill="#3a9ad8" stroke="#1a5a90"/><path d="M2 3l12 7" stroke="#f0e040" stroke-width="1.5"/></svg>
<svg style="left:637px;top:481px" width="3" height="16"><g fill="#aaa"><rect y="0" width="2" height="2"/><rect y="5" width="2" height="2"/><rect y="10" width="2" height="2"/></g></svg>
<svg style="left:646px;top:481px" width="17" height="16"><rect x="7" y="1" width="9" height="13" fill="#e8e080" stroke="#777" stroke-width=".7"/><circle cx="4.5" cy="10" r="3.5" fill="#e02020"/><rect x="1" y="11" width="7" height="4" fill="#666"/></svg>
<svg style="left:669px;top:481px" width="17" height="16"><rect x="7" y="1" width="9" height="13" fill="#e8e080" stroke="#777" stroke-width=".7"/><rect x="1.5" y="8.5" width="6" height="6" fill="none" stroke="#3030e0" stroke-width="1.5"/></svg>
<svg style="left:692px;top:481px" width="17" height="16"><rect x="6.5" y="1.5" width="9" height="13" fill="#fff" stroke="#8ab"/><path d="M8 4h6M8 7h6M8 10h6M8 13h6" stroke="#2a5ac0" stroke-width="1.5"/><path d="M2 8v7M0 8l2 2 2-2" stroke="#888" stroke-width="1.3" fill="none"/></svg>
<svg style="left:715px;top:481px" width="16" height="16"><path d="M.5 .5h11l3 3v12H.5z" fill="#fff" stroke="#222"/><text x="1" y="6" font-size="6" fill="#1a6ad0" font-weight="bold" font-family="Liberation Sans">CSV</text></svg>
<svg style="left:760px;top:489px" width="10" height="11"><rect width="10" height="11" fill="#ddd"/><path d="M2 2h6M2 5h6L5 9z" stroke="#111" fill="#111"/></svg>
<div class="a" style="left:0;top:503px;width:22px;height:22px;border:1px solid #3a7ad8;background:#f4f8fd"></div>
<svg style="left:3px;top:505px" width="16" height="17"><path d="M1 1v11l3-3 3 6 2-1-3-6h5z" fill="#cfe0f8" stroke="#2a62c8" stroke-width="1.2"/></svg>
<div class="a" style="left:27px;top:506px;width:1px;height:16px;background:#b8b8b8"></div>
<div class="t" style="left:32px;top:504px;font-size:19px;font-family:'Liberation Serif';font-style:italic;font-weight:bold;color:#3a6ac8">A</div>
<div class="a" style="left:55px;top:506px;width:1px;height:16px;background:#b8b8b8"></div>
<svg style="left:65px;top:510px" width="8" height="8"><circle cx="4" cy="4" r="3" fill="#3a7ad8"/></svg>
<svg style="left:85px;top:506px" width="14" height="14"><path d="M1 13L13 1" stroke="#2a62c8" stroke-width="1.8"/></svg>
<svg style="left:107px;top:506px" width="16" height="14"><path d="M1 13l5-5 4 4 5-9" fill="none" stroke="#2a62c8" stroke-width="1.8"/></svg>
<svg style="left:131px;top:506px" width="14" height="14"><rect x="1" y="1" width="12" height="12" fill="none" stroke="#2a62c8" stroke-width="1.8"/></svg>
<svg style="left:153px;top:506px" width="16" height="14"><path d="M8 1l7 5-3 7H4L1 6z" fill="none" stroke="#2a62c8" stroke-width="1.8"/></svg>
<svg style="left:176px;top:508px" width="16" height="10"><ellipse cx="8" cy="5" rx="7" ry="4" fill="none" stroke="#2a62c8" stroke-width="1.8"/></svg>
<svg style="left:200px;top:506px" width="14" height="14"><path d="M1 13Q4 3 13 1" fill="none" stroke="#2a62c8" stroke-width="1.8"/></svg>
<svg style="left:222px;top:505px" width="15" height="16"><path d="M2 1v14M2 2h12M4 5h9M4 8h9M4 11h9M2 15h12" stroke="#2a62c8" stroke-width="1.3"/></svg>
<svg style="left:245px;top:507px" width="16" height="12"><rect x=".5" y=".5" width="15" height="11" fill="#1a5aa0"/><rect x="2" y="2" width="12" height="8" fill="#6ab0f0"/><rect x="2" y="7" width="12" height="3" fill="#3c9a3c"/><rect x="12" y="8" width="2" height="2" fill="#e03030"/></svg>
<svg style="left:268px;top:507px" width="17" height="14"><rect x=".5" y=".5" width="15" height="11" fill="#1a5aa0"/><rect x="2" y="2" width="12" height="8" fill="#6ab0f0"/><path d="M10 13c0-3 2-5 6-5M13 6l3 2-3 2" fill="none" stroke="#f0a020" stroke-width="2"/></svg>
<div class="a" style="left:291px;top:506px;width:1px;height:16px;background:#b8b8b8"></div>
<svg style="left:298px;top:507px" width="14" height="14"><rect x=".5" y=".5" width="13" height="13" fill="#fff" stroke="#2a62c8"/><path d="M.5 5h13M.5 9h13M7 .5v13" stroke="#2a62c8" stroke-width="1.5"/><rect x="1" y="1" width="12" height="3" fill="#2a62c8"/></svg>
<div class="a" style="left:319px;top:505px;width:1px;height:16px;background:#b8b8b8"></div>
<svg style="left:323px;top:506px" width="3" height="16"><g fill="#aaa"><rect y="0" width="2" height="2"/><rect y="5" width="2" height="2"/><rect y="10" width="2" height="2"/></g></svg>
<svg style="left:332px;top:507px" width="17" height="14"><ellipse cx="8.5" cy="9" rx="8" ry="4.5" fill="#a09060"/><ellipse cx="8.5" cy="6" rx="7" ry="4" fill="#40c040"/></svg>
<svg style="left:356px;top:505px" width="14" height="17"><circle cx="7" cy="6.5" r="6" fill="#f8e080" stroke="#d8b040"/><rect x="4.5" y="12" width="5" height="4" fill="#555"/></svg>
<svg style="left:378px;top:505px" width="17" height="17"><path d="M.5 4.5h12v12H.5z" fill="#fff" stroke="#888"/><path d="M2 8h9M2 11h9M2 14h9" stroke="#888"/><rect x="9" y="0" width="7" height="6" fill="#fff" stroke="#888" stroke-width=".6"/><path d="M10 1.5h5L12.5 5z" fill="#2a62c8"/></svg>
<div class="a" style="left:401px;top:506px;width:1px;height:16px;background:#b8b8b8"></div>
<svg style="left:407px;top:508px" width="16" height="12"><rect x=".5" y=".5" width="15" height="11" fill="#2a7ad8" stroke="#1a4a90"/><text x="3" y="9.5" font-size="9" fill="#fff" font-weight="bold" font-family="Liberation Sans">12</text></svg>
<div class="a" style="left:431px;top:506px;width:1px;height:16px;background:#b8b8b8"></div>
<svg style="left:438px;top:506px" width="14" height="16"><rect width="14" height="16" fill="#555"/><path d="M0 4h14M0 8h14M0 12h14M3.5 0v16M7 0v16M10.5 0v16" stroke="#ddd" stroke-width=".8"/></svg>
<svg style="left:459px;top:508px" width="17" height="12"><path d="M1 11l6-6 9 2-4 5z" fill="#e0d8c0" stroke="#b0a080" stroke-width=".6"/><path d="M6 6l3-3" stroke="#444"/></svg>
<div class="a" style="left:483px;top:506px;width:1px;height:16px;background:#b8b8b8"></div>
<svg style="left:488px;top:505px" width="16" height="17"><rect x="1" y="8" width="4" height="8" fill="#2a7ad8"/><rect x="5" y="2" width="4" height="14" fill="#f0e040"/><rect x="10" y="5" width="4" height="11" fill="#e04020"/><path d="M0 16h16" stroke="#333"/></svg>
<svg style="left:511px;top:505px" width="16" height="17"><path d="M1 1v15h15" stroke="#555" fill="none"/><path d="M2 12l5-7 4 4 4-6" fill="none" stroke="#e03030"/><path d="M2 9l5 3 4-5 4 3" fill="none" stroke="#3a7ad8"/><path d="M6 14h8M11 11l3 3-3 3" fill="none" stroke="#50c040" stroke-width="2"/></svg>
<svg style="left:534px;top:505px" width="16" height="17"><path d="M1 1v15h15" stroke="#555" fill="none"/><path d="M2 12l5-7 4 4 4-6" fill="none" stroke="#e03030"/><path d="M2 3l6 9 7-5" fill="none" stroke="#3a7ad8"/></svg>
<svg style="left:557px;top:505px" width="16" height="17"><path d="M8 1v14M1 8h14" stroke="#444"/><path d="M8 2l6 6-6 6-6-6z" fill="none" stroke="#3a7ad8" stroke-width="1.3"/><path d="M5 14h9M11 11l3 3-3 3" fill="none" stroke="#50c040" stroke-width="2"/></svg>
<svg style="left:580px;top:506px" width="16" height="16"><path d="M8 1v14M1 8h14" stroke="#444"/><path d="M8 2l6 6-6 6-6-6z" fill="none" stroke="#3a7ad8" stroke-width="1.5"/><circle cx="8" cy="8" r="1.5" fill="#e03030"/></svg>
<div class="a" style="left:604px;top:506px;width:1px;height:16px;background:#b8b8b8"></div>
<svg style="left:609px;top:505px" width="16" height="17"><path d="M3 14V6a5 5 0 0110 0v8z" fill="#e85020"/><rect x="1" y="13" width="14" height="3" fill="#888"/><ellipse cx="8" cy="7" rx="2" ry="3" fill="#f8c080"/></svg>
<svg style="left:632px;top:505px" width="16" height="17"><rect x=".5" y=".5" width="11" height="15" fill="#eee" stroke="#ccc"/><path d="M8 16v-6a3.5 3.5 0 017 0v6z" fill="#e85020"/></svg>
<svg style="left:655px;top:507px" width="16" height="12"><rect x=".5" y=".5" width="15" height="11" fill="#2a7ad8" stroke="#1a4a90"/><text x="4" y="10" font-size="10" fill="#fff" font-weight="bold" font-family="Liberation Sans">A</text></svg>
<div class="a" style="left:679px;top:506px;width:1px;height:16px;background:#b8b8b8"></div>
<svg style="left:684px;top:506px" width="17" height="16"><rect x=".5" y=".5" width="10" height="8" fill="#fff" stroke="#999"/><rect x="5.5" y="6.5" width="11" height="9" fill="#e0e0e0" stroke="#999"/><rect x="1" y="1" width="9" height="2" fill="#7ab0e8"/></svg>
<svg style="left:707px;top:506px" width="17" height="15"><rect x=".5" y=".5" width="10" height="8" fill="#ddd" stroke="#444"/><rect x="5.5" y="6.5" width="11" height="8" fill="#ddd" stroke="#444"/><path d="M3 1v7M6 1v7M9 8v6M12 8v6" stroke="#444"/></svg>
<svg style="left:736px;top:514px" width="10" height="11"><rect width="10" height="11" fill="#ddd"/><path d="M2 2h6M2 5h6L5 9z" stroke="#111" fill="#111"/></svg>
<svg style="left:750px;top:506px" width="3" height="16"><g fill="#aaa"><rect y="0" width="2" height="2"/><rect y="5" width="2" height="2"/><rect y="10" width="2" height="2"/></g></svg>
<svg style="left:760px;top:514px" width="10" height="11"><rect width="10" height="11" fill="#ddd"/><path d="M2 2h6M2 5h6L5 9z" stroke="#111" fill="#111"/></svg>
<svg style="left:4px;top:531px" width="16" height="17"><path d="M1 1v15M15 1v15M1 4h14M1 12h14" stroke="#aaa" stroke-width="1.3"/><path d="M3 8h8M8 6l3 2-3 2" stroke="#aaa" fill="none"/></svg>
<svg style="left:27px;top:531px" width="16" height="16"><path d="M1 1h14v3H1zM8 4v12M5 8l3-4 3 4" fill="#aaa" stroke="#aaa" stroke-width="1.5"/></svg>
<svg style="left:50px;top:533px" width="17" height="12"><path d="M1 6l4-5h11v10H5z" fill="#ddd" stroke="#aaa"/><circle cx="7" cy="6" r="1.5" fill="none" stroke="#999"/></svg>
<div class="a" style="left:72px;top:531px;width:1px;height:16px;background:#b8b8b8"></div>
<svg style="left:78px;top:532px" width="16" height="14"><path d="M0 7h4M12 7h4M4 1v12M12 1v12" stroke="#aaa" stroke-width="2"/></svg>
<svg style="left:101px;top:532px" width="16" height="14"><path d="M0 7h4M12 7h4M4 1v12M12 1v12M3 13l10-12" stroke="#aaa" stroke-width="2"/></svg>
<svg style="left:124px;top:532px" width="16" height="14"><path d="M0 7h3M13 7h3" stroke="#aaa" stroke-width="2"/><circle cx="8" cy="7" r="5" fill="none" stroke="#aaa" stroke-width="1.5"/></svg>
<svg style="left:147px;top:530px" width="16" height="17"><path d="M2 7a6 5 0 0112 0z" fill="#e0e0e0" stroke="#aaa"/><path d="M8 7v9M4 11l4-4 4 4M1 16h6" stroke="#aaa" stroke-width="1.5" fill="none"/></svg>
<svg style="left:170px;top:530px" width="16" height="17"><path d="M2 7a6 5 0 0112 0z" fill="#e0e0e0" stroke="#aaa"/><path d="M8 7v9M4 12l4 4 4-4M9 16h6" stroke="#aaa" stroke-width="1.5" fill="none"/></svg>
<svg style="left:193px;top:530px" width="16" height="17"><rect x="1" y="1" width="14" height="7" fill="#999"/><path d="M8 8v8M4 12l4 4 4-4" stroke="#aaa" stroke-width="1.5" fill="none"/></svg>
<svg style="left:216px;top:530px" width="16" height="17"><rect x="1" y="1" width="14" height="7" fill="#999"/><path d="M8 16V8M4 12l4-4 4 4" stroke="#aaa" stroke-width="1.5" fill="none"/></svg>

<!-- GP panels -->
<div class="a" style="left:0;top:553px;width:772px;height:435px;background:#f7f7f7"></div>
<!-- screen list panel -->
<div class="a" style="left:0;top:555px;width:234px;height:18px;background:#f0f0f0;border:1px solid #8a8a8a;border-left:none"></div>
<div class="t" style="left:-3px;top:558px;font-size:12px">画面列表</div>
<svg style="left:205px;top:558px" width="8" height="11"><path d="M2 0h4M2.5 0v6M5.5 0v6M0 6h8M4 6v5" stroke="#111" stroke-width="1.2"/></svg>
<svg style="left:219px;top:560px" width="9" height="9"><path d="M1 1l7 7M8 1L1 8" stroke="#111" stroke-width="2"/></svg>
<div class="a" style="left:0;top:578px;width:233px;height:28px;background:#fff"></div>
<div class="a" style="left:0;top:609px;width:233px;height:28px;background:#fff"></div>
<div class="a" style="left:0;top:640px;width:233px;height:28px;background:#fff"></div>
<div class="a" style="left:0;top:671px;width:233px;height:29px;background:#fff"></div>
<div class="t" style="left:-3px;top:585px;font-size:12px">画面类型</div>
<div class="t" style="left:-3px;top:615px;font-size:12px">查找方法</div>
<div class="t" style="left:-3px;top:646px;font-size:12px">精确查找</div>
<div class="a" style="left:95px;top:583px;width:136px;height:20px;border:1px solid #b8b8b8;border-radius:2px;background:#fff"></div>
<div class="t" style="left:99px;top:587px;font-size:12px">全部</div>
<svg style="left:216px;top:590px" width="10" height="6"><path d="M1 1l4 4 4-4" fill="none" stroke="#444" stroke-width="1.1"/></svg>
<div class="a" style="left:95px;top:613px;width:136px;height:20px;border:1px solid #b8b8b8;border-radius:2px;background:#fff"></div>
<div class="t" style="left:99px;top:617px;font-size:12px">标题</div>
<svg style="left:216px;top:620px" width="10" height="6"><path d="M1 1l4 4 4-4" fill="none" stroke="#444" stroke-width="1.1"/></svg>
<div class="a" style="left:95px;top:646px;width:86px;height:20px;border:1px solid #c8c8c8;border-bottom-color:#888;border-radius:2px;background:#fff"></div>
<div class="a" style="left:184px;top:646px;width:46px;height:19px;border:1px solid #e0e0e0;border-radius:3px;background:#f4f4f4"></div>
<div class="t" style="left:194px;top:649px;font-size:12px;color:#a0a0a0">查找</div>
<svg style="left:0;top:677px" width="8" height="14"><rect x="0" y="1" width="7" height="12" fill="#2a7ad8"/><rect x="0" y="3" width="6" height="3" fill="#9ad0f8"/></svg>
<svg style="left:15px;top:677px" width="16" height="15"><rect x="2" y="4" width="13" height="11" fill="#aaa"/><path d="M1 5l5-4 4 3" fill="#ccc" stroke="#bbb"/></svg>
<svg style="left:38px;top:677px" width="16" height="16"><rect x="0" y="2" width="10" height="13" fill="#aaa"/><rect x="6" y="7" width="9" height="9" fill="#ccc"/><path d="M9 10l4 4" stroke="#888"/></svg>
<svg style="left:62px;top:678px" width="13" height="13"><path d="M1 1l11 11M12 1L1 12" stroke="#aaa" stroke-width="2.5"/></svg>
<div class="a" style="left:83px;top:675px;width:1px;height:18px;background:#aaa"></div>
<svg style="left:92px;top:677px" width="16" height="15"><rect x="2.5" y=".5" width="11" height="8" fill="#6ac8f0" stroke="#444"/><path d="M8 9v3M1 13h14" stroke="#222" stroke-width="2"/></svg>
<svg style="left:115px;top:677px" width="17" height="15"><rect x=".5" y=".5" width="11" height="8" fill="#bfe0f4" stroke="#4a8ab0"/><rect x="3.5" y="3.5" width="11" height="8" fill="#8ac8f0" stroke="#2a6a98"/><rect x="5.5" y="6.5" width="11" height="8" fill="#3a9ad8" stroke="#1a5a90"/></svg>
<svg style="left:138px;top:676px" width="17" height="17"><rect x="6.5" y=".5" width="9" height="11" fill="#fff" stroke="#2a5aa0"/><path d="M8 3h6M8 6h6" stroke="#2a5aa0"/><path d="M1 9c0-5 4-6 7-5M12 13c-2 3-7 3-9 0" fill="none" stroke="#e02020" stroke-width="2"/><rect x="1" y="10" width="6" height="6" fill="#30a040"/></svg>
<svg style="left:161px;top:676px" width="17" height="17"><rect x="1" y="1" width="8" height="7" fill="#777" stroke="#2a62c8"/><rect x="8" y="9" width="8" height="7" fill="#777" stroke="#2a62c8"/><path d="M5 8v5h3" stroke="#2a62c8" fill="none"/></svg>
<!-- list -->
<div class="a" style="left:0;top:707px;width:233px;height:182px;background:#fdf8ec;border:1px solid #8a8a8a;border-left:none"></div>
<div class="a" style="left:0;top:708px;width:215px;height:23px;background:#d0e0f8"></div>
<div class="a" style="left:216px;top:708px;width:16px;height:180px;background:#f0f0f0"></div>
<div class="a" style="left:223px;top:725px;width:2px;height:68px;background:#8a8a8a"></div>
<div class="a" style="left:0;top:872px;width:232px;height:16px;background:#f0f0f0"></div>
<div class="a" style="left:7px;top:880px;width:123px;height:2px;background:#8a8a8a"></div>
<svg style="left:-1px;top:713px" width="9" height="14"><path d="M0 2l5 2v8L0 13z" fill="#5a8ac0"/><circle cx="5" cy="5" r="2.5" fill="#f0c060"/><circle cx="4" cy="11" r="2" fill="#60b060"/></svg>
<div class="t" style="left:10px;top:713px;font-size:12px;color:#1a2a9a">基本画面</div>
<div class="a" style="left:6px;top:737px;width:64px;height:41px;background:#000"></div>
<div class="a" style="left:10px;top:745px;width:40px;height:2px;background:#2020e0"></div>
<div class="a" style="left:13px;top:747px;width:2px;height:23px;background:#2020e0"></div>
<div class="t" style="left:137px;top:752px;font-size:11.5px">B0001</div>
<svg style="left:-1px;top:787px" width="9" height="14"><path d="M0 2l5 2v8L0 13z" fill="#5a8ac0"/><circle cx="5" cy="5" r="2.5" fill="#f0c060"/><circle cx="4" cy="11" r="2" fill="#60b060"/></svg>
<div class="t" style="left:10px;top:787px;font-size:12px">窗口画面</div>
<svg style="left:-1px;top:811px" width="9" height="14"><path d="M0 2l5 2v8L0 13z" fill="#5a8ac0"/><circle cx="5" cy="5" r="2.5" fill="#f0c060"/><circle cx="4" cy="11" r="2" fill="#60b060"/></svg>
<div class="t" style="left:10px;top:811px;font-size:12px">键盘画面</div>
<svg style="left:-1px;top:835px" width="9" height="14"><path d="M0 2l5 2v8L0 13z" fill="#5a8ac0"/><circle cx="5" cy="5" r="2.5" fill="#f0c060"/><circle cx="4" cy="11" r="2" fill="#60b060"/></svg>
<div class="t" style="left:10px;top:835px;font-size:12px">视频模块窗口画面</div>
<svg style="left:-1px;top:859px" width="9" height="14"><path d="M0 2l5 2v8L0 13z" fill="#5a8ac0"/><circle cx="5" cy="5" r="2.5" fill="#f0c060"/><circle cx="4" cy="11" r="2" fill="#60b060"/></svg>
<div class="t" style="left:10px;top:859px;font-size:12px">逻辑画面</div>
<div class="a" style="left:0;top:889px;width:233px;height:1px;background:#8a8a8a"></div>
<div class="a" style="left:163px;top:891px;width:64px;height:21px;background:#fbfbfb;border:1px solid #8a8a8a;border-top:none"></div>
<svg style="left:0;top:894px" width="10" height="15"><path d="M0 1h10M0 5h10M0 9h10M0 13h10M3 0v15M7 0v15" stroke="#30e030" stroke-width="1.5"/></svg>
<div class="t" style="left:16px;top:895px;font-size:12px;color:#888">地址</div>
<div class="a" style="left:44px;top:894px;width:1px;height:15px;background:#888"></div>
<svg style="left:48px;top:894px" width="15" height="15"><rect x="0" y="0" width="5" height="5" fill="#20d0f0"/><rect x="5" y="0" width="5" height="5" fill="#30a030"/><rect x="10" y="0" width="5" height="5" fill="#f0e020"/><rect x="0" y="5" width="5" height="5" fill="#a030a0"/><rect x="10" y="5" width="5" height="5" fill="#e03030"/><rect x="0" y="10" width="5" height="5" fill="#e03030"/><rect x="5" y="10" width="5" height="5" fill="#a040c0"/><rect x="10" y="10" width="5" height="5" fill="#e02020"/></svg>
<div class="t" style="left:68px;top:895px;font-size:12px;color:#888">颜色</div>
<div class="a" style="left:96px;top:894px;width:1px;height:15px;background:#888"></div>
<svg style="left:100px;top:893px" width="16" height="16"><circle cx="5" cy="4" r="2.5" fill="#e03040"/><circle cx="11" cy="3" r="2" fill="#f0e020"/><circle cx="13" cy="8" r="2.5" fill="#60c040"/><rect x="0" y="9" width="10" height="6" fill="#2a7ad8"/></svg>
<div class="t" style="left:121px;top:895px;font-size:12px;color:#888">工程窗</div>
<svg style="left:166px;top:894px" width="15" height="15"><rect x=".5" y=".5" width="14" height="14" fill="#e4ecfa" stroke="#3a6ad8"/><path d="M2 2h4v4H2zM9 2h4v4H9zM2 9h4v4H2zM9 9h4v4H9z" fill="none" stroke="#3a6ad8"/></svg>
<div class="t" style="left:186px;top:895px;font-size:12px">画面列</div>
<!-- screen panel -->
<div class="a" style="left:238px;top:553px;width:168px;height:361px;background:#f0f0f0;border:1px solid #8a8a8a"></div>
<div class="a" style="left:239px;top:554px;width:162px;height:21px;background:#f0f0f0"></div>
<div class="a" style="left:243px;top:555px;width:158px;height:20px;background:#f8f8f8"></div>
<svg style="left:246px;top:558px" width="15" height="11"><rect x=".5" y=".5" width="14" height="10" fill="#fff" stroke="#1a5aa0"/><rect x="2" y="2" width="11" height="7" fill="#5aa8e8"/></svg>
<div class="t" style="left:269px;top:558px;font-size:12px;font-weight:bold">基本 1(无标题)</div>
<svg style="left:361px;top:558px" width="10" height="10"><rect width="10" height="10" fill="#999"/><path d="M2 2l6 6M8 2L2 8" stroke="#fff" stroke-width="1.4"/></svg>
<svg style="left:380px;top:560px" width="5" height="8"><path d="M5 0v8L0 4z" fill="none" stroke="#888"/></svg>
<svg style="left:393px;top:560px" width="5" height="8"><path d="M0 0v8l5-4z" fill="#111"/></svg>
<div class="a" style="left:240px;top:577px;width:147px;height:318px;background:#a0a0a0"></div>
<div class="a" style="left:327px;top:594px;width:12px;height:5px;border:1px solid #111;background:#ddd"></div>
<div class="a" style="left:299px;top:616px;width:88px;height:279px;background:#000;border-left:1px solid #eee;border-top:1px solid #eee"></div>
<div class="a" style="left:300px;top:617px;width:87px;height:278px;background-image:radial-gradient(#777733 0.6px,transparent 0.8px);background-size:20px 20px;background-position:-5px 2px"></div>
<div class="a" style="left:395px;top:600px;width:2px;height:98px;background:#8a8a8a"></div>
<div class="a" style="left:257px;top:904px;width:16px;height:2px;background:#8a8a8a"></div>
<div class="a" style="left:361px;top:776px;width:16px;height:17px;background:#fff;border:1px solid #2a62c8"></div>
<svg style="left:362px;top:777px" width="15" height="15"><circle cx="8" cy="7" r="5.5" fill="#4a80d8"/><circle cx="6.5" cy="5.5" r="2" fill="#cde"/><path d="M3 11l-2 3" stroke="#444" stroke-width="1.5"/></svg>
<div class="a" style="left:377px;top:779px;width:10px;height:11px;background:#2020e0"></div>
<svg style="left:377px;top:772px" width="9" height="24"><circle cx="4" cy="4" r="3" fill="#fff" stroke="#888" stroke-width=".5"/><circle cx="4" cy="12" r="3" fill="#fff" stroke="#888" stroke-width=".5"/><circle cx="4" cy="20" r="3" fill="#fff" stroke="#888" stroke-width=".5"/></svg>

<!-- property panel -->
<div class="a" style="left:410px;top:555px;width:362px;height:18px;background:#9bb5d3"></div>
<div class="t" style="left:415px;top:558px;font-size:12px">属性</div>
<svg style="left:742px;top:558px" width="8" height="11"><path d="M2 0h4M2.5 0v6M5.5 0v6M0 6h8M4 6v5" stroke="#111" stroke-width="1.2"/></svg>
<svg style="left:757px;top:560px" width="9" height="9"><path d="M1 1l7 7M8 1L1 8" stroke="#111" stroke-width="2"/></svg>
<div class="a" style="left:411px;top:578px;width:360px;height:28px;background:#fff"></div>
<div class="t" style="left:417px;top:585px;font-size:12px">数据显示器</div>
<div class="a" style="left:411px;top:609px;width:360px;height:28px;background:#fff"></div>
<svg style="left:413px;top:614px" width="17" height="17"><path d="M9 1v10M4 6h10" stroke="#30a0a0" stroke-width="3"/><text x="0" y="16" font-size="6" fill="#e02020" font-weight="bold" font-family="Liberation Sans">ALL</text></svg>
<svg style="left:436px;top:614px" width="17" height="17"><path d="M4 8h11" stroke="#30a0a0" stroke-width="3"/><text x="0" y="16" font-size="6" fill="#e02020" font-weight="bold" font-family="Liberation Sans">ALL</text></svg>
<svg style="left:462px;top:614px" width="10" height="16"><path d="M2 4l4-3v14" fill="none" stroke="#50a0a0" stroke-width="2.5"/></svg>
<svg style="left:483px;top:614px" width="17" height="15"><path d="M1 1h15L9 8z" fill="#aaa"/><circle cx="4" cy="10" r="2.5" fill="#2040d0"/><circle cx="9" cy="12" r="2.5" fill="#f0d020"/><circle cx="13" cy="11" r="2.5" fill="#e02020"/></svg>
<svg style="left:506px;top:614px" width="17" height="15"><path d="M1 1h15L9 8z" fill="#aaa"/><text x="0" y="13" font-size="7" fill="#c02020" font-weight="bold" font-family="Liberation Sans">ABC</text></svg>
<!-- property table -->
<div class="a" style="left:411px;top:644px;width:360px;height:245px;background:#fff;border:1px solid #8a8a8a"></div>
<div class="a" style="left:753px;top:645px;width:17px;height:243px;background:#f0f0f0"></div>
<div class="a" style="left:761px;top:668px;width:2px;height:155px;background:#8a8a8a"></div>
<div class="a" style="left:412px;top:645px;width:341px;height:16px;background:#fffbdc;border-bottom:1px solid #9a9a9a"></div>
<div class="a" style="left:541px;top:645px;width:1px;height:16px;background:#9a9a9a"></div>
<div class="t" style="left:415px;top:647px;font-size:12px">属性名称</div>
<div class="t" style="left:545px;top:647px;font-size:12px">值</div>
<div class="a" style="left:412px;top:661px;width:341px;height:227px;overflow:hidden">
<svg style="left:4px;top:4px" width="9" height="9"><rect x=".5" y=".5" width="8" height="8" fill="#fff" stroke="#999"/><path d="M2 4.5h5M4.5 2v5" stroke="#2a4a9a"/></svg>
<div class="t" style="left:16px;top:2px;font-size:12px;color:#000">部件信息</div>
<div class="a" style="left:0;top:15px;width:341px;height:1px;background:#ececec"></div>
<svg style="left:4px;top:20px" width="9" height="9"><rect x=".5" y=".5" width="8" height="8" fill="#fff" stroke="#999"/><path d="M2 4.5h5M4.5 2v5" stroke="#2a4a9a"/></svg>
<div class="t" style="left:16px;top:18px;font-size:12px;color:#000">坐标</div>
<div class="a" style="left:0;top:31px;width:341px;height:1px;background:#ececec"></div>
<svg style="left:4px;top:36px" width="9" height="9"><rect x=".5" y=".5" width="8" height="8" fill="#fff" stroke="#999"/><path d="M2 4.5h5" stroke="#2a4a9a"/></svg>
<div class="t" style="left:16px;top:34px;font-size:12px;color:#000">基本</div>
<div class="a" style="left:0;top:47px;width:341px;height:1px;background:#ececec"></div>
<div class="t" style="left:29px;top:50px;font-size:12px;color:#000">数据显示</div>
<div class="t" style="left:133px;top:50px;font-size:12px">文本显示</div>
<div class="a" style="left:0;top:63px;width:341px;height:1px;background:#ececec"></div>
<div class="a" style="left:129px;top:48px;width:1px;height:16px;background:#ececec"></div>
<div class="t" style="left:29px;top:66px;font-size:12px;color:#000">基本/ 扩展</div>
<div class="t" style="left:133px;top:66px;font-size:12px">基本</div>
<div class="a" style="left:0;top:79px;width:341px;height:1px;background:#ececec"></div>
<div class="a" style="left:129px;top:64px;width:1px;height:16px;background:#ececec"></div>
<div class="t" style="left:29px;top:82px;font-size:12px;color:#000">允许输入</div>
<div class="t" style="left:133px;top:82px;font-size:12.5px">OFF</div>
<div class="a" style="left:0;top:95px;width:341px;height:1px;background:#ececec"></div>
<div class="a" style="left:129px;top:80px;width:1px;height:16px;background:#ececec"></div>
<div class="t" style="left:29px;top:98px;font-size:12px;color:#000">监控字地址</div>
<div class="t" style="left:133px;top:98px;font-size:12.5px">[PLC1]DM00000</div>
<div class="a" style="left:0;top:111px;width:341px;height:1px;background:#ececec"></div>
<div class="a" style="left:129px;top:96px;width:1px;height:16px;background:#ececec"></div>
<svg style="left:4px;top:116px" width="9" height="9"><rect x=".5" y=".5" width="8" height="8" fill="#fff" stroke="#999"/><path d="M2 4.5h5" stroke="#2a4a9a"/></svg>
<div class="t" style="left:16px;top:114px;font-size:12px;color:#000">显示设置</div>
<div class="a" style="left:0;top:127px;width:341px;height:1px;background:#ececec"></div>
<svg style="left:17px;top:132px" width="9" height="9"><rect x=".5" y=".5" width="8" height="8" fill="#fff" stroke="#999"/><path d="M2 4.5h5" stroke="#2a4a9a"/></svg>
<div class="t" style="left:29px;top:130px;font-size:12px;color:#000">字体</div>
<div class="a" style="left:0;top:143px;width:341px;height:1px;background:#ececec"></div>
<div class="a" style="left:129px;top:128px;width:1px;height:16px;background:#ececec"></div>
<div class="t" style="left:42px;top:146px;font-size:12px;color:#000">字体类型</div>
<div class="t" style="left:133px;top:146px;font-size:12px">标准字体</div>
<div class="a" style="left:0;top:159px;width:341px;height:1px;background:#ececec"></div>
<div class="a" style="left:129px;top:144px;width:1px;height:16px;background:#ececec"></div>
<div class="a" style="left:0;top:160px;width:127px;height:16px;background:#0078d7"></div>
<div class="t" style="left:42px;top:162px;font-size:12px;color:#fff">显示语言</div>
<div class="t" style="left:133px;top:162px;font-size:12px">中文 (简体)</div>
<div class="a" style="left:0;top:175px;width:341px;height:1px;background:#ececec"></div>
<div class="a" style="left:129px;top:160px;width:1px;height:16px;background:#ececec"></div>
<div class="t" style="left:42px;top:178px;font-size:12px;color:#000">文本大小</div>
<div class="t" style="left:133px;top:178px;font-size:12px">8 x 16  像素</div>
<div class="a" style="left:0;top:191px;width:341px;height:1px;background:#ececec"></div>
<div class="a" style="left:129px;top:176px;width:1px;height:16px;background:#ececec"></div>
<div class="t" style="left:42px;top:194px;font-size:12px;color:#000">文本属性</div>
<div class="t" style="left:133px;top:194px;font-size:12px">标准</div>
<div class="a" style="left:0;top:207px;width:341px;height:1px;background:#ececec"></div>
<div class="a" style="left:129px;top:192px;width:1px;height:16px;background:#ececec"></div>
<div class="t" style="left:29px;top:210px;font-size:12px;color:#000">显示字符数</div>
<div class="t" style="left:133px;top:210px;font-size:12.5px">100</div>
<div class="a" style="left:0;top:223px;width:341px;height:1px;background:#ececec"></div>
<div class="a" style="left:129px;top:208px;width:1px;height:16px;background:#ececec"></div>
<div class="t" style="left:29px;top:226px;font-size:12px;color:#000">显示模式</div>
<div class="t" style="left:133px;top:226px;font-size:12px">自动</div>
<div class="a" style="left:0;top:239px;width:341px;height:1px;background:#ececec"></div>
<div class="a" style="left:129px;top:224px;width:1px;height:16px;background:#ececec"></div>
<svg style="left:327px;top:166px" width="10" height="6"><path d="M1 1l4 4 4-4" fill="none" stroke="#444" stroke-width="1.1"/></svg>
</div>
<div class="a" style="left:537px;top:815px;width:76px;height:27px;border:3px solid #ec1c24;border-radius:3px"></div>
<!-- property bottom tabs -->
<div class="a" style="left:410px;top:890px;width:362px;height:1px;background:#8a8a8a"></div>
<div class="a" style="left:416px;top:891px;width:50px;height:21px;background:#fbfbfb;border:1px solid #8a8a8a;border-top:none"></div>
<svg style="left:419px;top:894px" width="15" height="15"><circle cx="7.5" cy="7.5" r="7" fill="#1a4aa0"/><circle cx="7.5" cy="7.5" r="5" fill="#40c0f0"/><text x="4" y="11" font-size="8" fill="#fff" font-weight="bold" font-family="Liberation Sans">P</text></svg>
<div class="t" style="left:437px;top:895px;font-size:12px">属性</div>
<svg style="left:471px;top:893px" width="15" height="16"><path d="M1 1h13L1 14z" fill="none" stroke="#444"/><path d="M4 15l10-10" stroke="#d0a030" stroke-width="2"/></svg>
<div class="t" style="left:491px;top:895px;font-size:12px;color:#888">画面数据列表</div>
<div class="a" style="left:568px;top:894px;width:1px;height:15px;background:#888"></div>
<svg style="left:573px;top:892px" width="15" height="17"><rect x="1" y="3" width="13" height="13" rx="3" fill="#30a0c0"/><circle cx="7" cy="4" r="3" fill="#1a3a90"/><circle cx="5" cy="11" r="2" fill="#e03030"/><rect x="9" y="9" width="3" height="4" fill="#30c030"/></svg>
<div class="t" style="left:592px;top:895px;font-size:12px;color:#888">部件工具箱</div>
<div class="a" style="left:657px;top:894px;width:1px;height:15px;background:#888"></div>
<svg style="left:661px;top:894px" width="16" height="13"><path d="M0 5l10-4 6 3-10 4z" fill="#f0d080"/><path d="M0 5v6l6 2V8z" fill="#c09030"/><path d="M6 8v5l10-4V4z" fill="#80a030"/></svg>
<div class="t" style="left:681px;top:895px;font-size:12px;color:#888">包</div>
<div class="a" style="left:697px;top:894px;width:1px;height:15px;background:#888"></div>
<!-- error check -->
<div class="a" style="left:0;top:914px;width:772px;height:27px;background:#f7f7f7"></div>
<div class="a" style="left:0;top:918px;width:70px;height:22px;border:1px solid #8a8a8a;border-left:none;border-bottom:none;background:#fafafa"></div>
<svg style="left:0;top:922px" width="9" height="13"><rect x="-3" y=".5" width="11" height="11" fill="#fff" stroke="#222"/><path d="M0 10l7-8" stroke="#c03030"/></svg>
<div class="t" style="left:16px;top:922px;font-size:12px">错误检查</div>
<!-- F key bar -->
<div class="a" style="left:0;top:941px;width:772px;height:25px;background:#f5f5f5;border-bottom:1px solid #e0e0e0"></div>
<div class="a" style="left:0px;top:945px;width:26px;height:15px;background:#d8e6f5"></div>
<div class="t" style="left:2px;top:947px;font-size:12.5px;color:#111">F1</div>
<div class="t" style="left:27px;top:945px;font-size:12px;color:#111">手册</div>
<div class="a" style="left:62px;top:945px;width:26px;height:15px;background:#e2e2e2"></div>
<div class="t" style="left:64px;top:947px;font-size:12.5px;color:#a0a0a0">F2</div>
<div class="t" style="left:89px;top:945px;font-size:12.5px;color:#a0a0a0">编...</div>
<div class="a" style="left:125px;top:945px;width:26px;height:15px;background:#e2e2e2"></div>
<div class="t" style="left:127px;top:947px;font-size:12.5px;color:#a0a0a0">F3</div>
<div class="a" style="left:188px;top:945px;width:26px;height:15px;background:#e2e2e2"></div>
<div class="t" style="left:190px;top:947px;font-size:12.5px;color:#a0a0a0">F4</div>
<div class="a" style="left:252px;top:945px;width:26px;height:15px;background:#d8e6f5"></div>
<div class="t" style="left:254px;top:947px;font-size:12.5px;color:#111">F5</div>
<div class="t" style="left:279px;top:945px;font-size:12.5px;color:#111">下...</div>
<div class="a" style="left:315px;top:945px;width:26px;height:15px;background:#d8e6f5"></div>
<div class="t" style="left:317px;top:947px;font-size:12.5px;color:#111">F6</div>
<div class="t" style="left:342px;top:945px;font-size:12.5px;color:#111">上...</div>
<div class="a" style="left:377px;top:945px;width:26px;height:15px;background:#e2e2e2"></div>
<div class="t" style="left:379px;top:947px;font-size:12.5px;color:#a0a0a0">F7</div>
<div class="t" style="left:404px;top:945px;font-size:12.5px;color:#a0a0a0">下...</div>
<div class="a" style="left:440px;top:945px;width:26px;height:15px;background:#e2e2e2"></div>
<div class="t" style="left:442px;top:947px;font-size:12.5px;color:#a0a0a0">F8</div>
<div class="t" style="left:467px;top:945px;font-size:12.5px;color:#a0a0a0">上...</div>
<div class="a" style="left:503px;top:945px;width:26px;height:15px;background:#e2e2e2"></div>
<div class="t" style="left:505px;top:947px;font-size:12.5px;color:#a0a0a0">F9</div>
<div class="t" style="left:530px;top:945px;font-size:12.5px;color:#a0a0a0">屉...</div>
<div class="a" style="left:567px;top:945px;width:26px;height:15px;background:#d8e6f5"></div>
<div class="t" style="left:569px;top:947px;font-size:12.5px;color:#111">F10</div>
<div class="t" style="left:594px;top:945px;font-size:12px;color:#111">菜单</div>
<div class="a" style="left:630px;top:945px;width:26px;height:15px;background:#d8e6f5"></div>
<div class="t" style="left:632px;top:947px;font-size:12.5px;color:#111">F11</div>
<div class="t" style="left:657px;top:945px;font-size:12px;color:#111">全屏</div>
<div class="a" style="left:693px;top:945px;width:26px;height:15px;background:#d8e6f5"></div>
<div class="t" style="left:695px;top:947px;font-size:12.5px;color:#111">F12</div>
<div class="t" style="left:720px;top:945px;font-size:12px;color:#111">模拟</div>
<!-- GP status bar -->
<div class="a" style="left:0;top:966px;width:772px;height:22px;background:#fafafa"></div>
<svg style="left:-5px;top:969px" width="11" height="14"><circle cx="5" cy="7" r="5" fill="#1a8a2a"/></svg>
<div class="t" style="left:10px;top:970px;font-size:11.5px;font-family:'Liberation Mono';letter-spacing:-.9px">选择 数据显示器[DD_0000], (  80, 159) - ( 8</div>
<div class="a" style="left:263px;top:968px;width:1px;height:18px;background:#ddd"></div>
<div class="a" style="left:273px;top:972px;width:12px;height:12px;background:#222;border-radius:2px"></div>
<div class="a" style="left:276px;top:977px;width:6px;height:2px;background:#fff"></div>
<div class="a" style="left:291px;top:970px;width:99px;height:3px;background:#bbb"></div>
<svg style="left:296px;top:974px" width="95" height="8"><path d="M0 4h95" stroke="#333" stroke-width="3" stroke-dasharray="2 4"/></svg>
<div class="a" style="left:339px;top:970px;width:4px;height:14px;background:#555;border-radius:2px"></div>
<div class="a" style="left:399px;top:972px;width:12px;height:12px;background:#222;border-radius:2px"></div>
<svg style="left:400px;top:973px" width="10" height="10"><path d="M5 1v8M1 5h8" stroke="#fff" stroke-width="2"/></svg>
<div class="a" style="left:417px;top:969px;width:81px;height:17px;background:#d8d8d8;border:1px solid #999"></div>
<div class="t" style="left:513px;top:968px;font-size:14px">+</div>
<div class="t" style="left:533px;top:970px;font-size:12px;font-family:'Liberation Mono'">----,----</div>
<div class="a" style="left:603px;top:968px;width:1px;height:18px;background:#ddd"></div>
<div class="t" style="left:607px;top:971px;font-size:11px;font-family:'Liberation Mono';letter-spacing:-.65px">ST-6600WA WXGA (1280*800)</div>
<div class="a" style="left:755px;top:968px;width:1px;height:18px;background:#ddd"></div>
<svg style="left:760px;top:976px" width="10" height="10"><g fill="#bbb"><rect x="7" y="1" width="2" height="2"/><rect x="4" y="4" width="2" height="2"/><rect x="7" y="4" width="2" height="2"/><rect x="1" y="7" width="2" height="2"/><rect x="4" y="7" width="2" height="2"/><rect x="7" y="7" width="2" height="2"/></g></svg>
<div class="a" style="left:771px;top:427px;width:2px;height:561px;background:#8f8bd8"></div>
<div class="a" style="left:0;top:986px;width:773px;height:2px;background:#a8a4e0"></div>

</body></html>
